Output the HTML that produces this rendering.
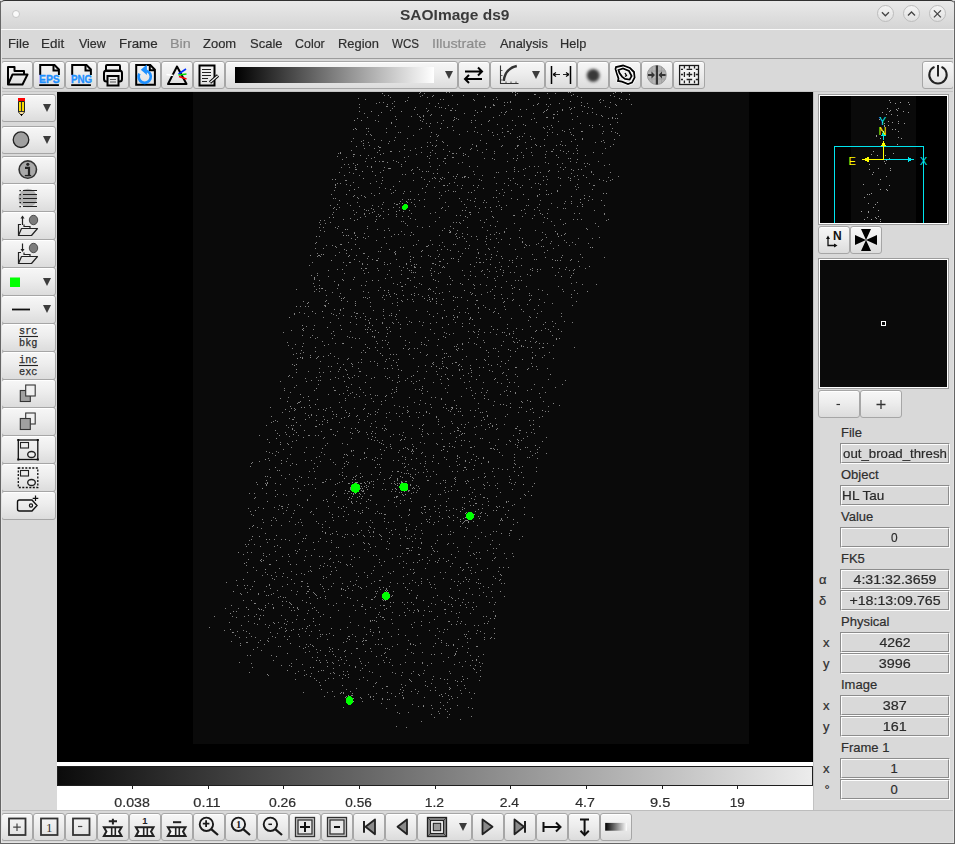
<!DOCTYPE html><html><head><meta charset="utf-8"><style>
*{margin:0;padding:0;box-sizing:border-box}
html,body{width:955px;height:844px;overflow:hidden;background:#d9d9d9;font-family:"Liberation Sans",sans-serif;color:#2e2e2e}
.mi,.lbl,.et,.tl{-webkit-text-stroke:0.2px currentColor}
.a{position:absolute}
.b{position:absolute;border:1px solid #a6a6a6;border-radius:3px;background:linear-gradient(#f7f7f7 0%,#ededed 45%,#dcdcdc 100%);box-shadow:inset 0 1px 0 #fff}
.b svg{position:absolute;left:-1px;top:-1px;overflow:visible}
.mi{position:absolute;top:36px;font-size:13.5px;color:#2e2e2e;white-space:nowrap}
.dis{color:#8c8c8c}
.lbl{position:absolute;font-size:13px;color:#2e2e2e;white-space:nowrap}
.ent{position:absolute;border:1px solid;border-color:#8c8c8c #fdfdfd #fdfdfd #8c8c8c;background:#d9d9d9;overflow:hidden}
.ent>.ib{position:absolute;left:0;top:0;right:0;bottom:0;border:1px solid;border-color:#fdfdfd #8c8c8c #8c8c8c #fdfdfd}
.et{position:absolute;top:2px;left:0;font-size:13px;color:#2a2a2a;white-space:nowrap;width:100%;text-align:center}
.tk{position:absolute;top:786px;width:1px;height:3px;background:#222}
.tl{position:absolute;font-size:12.5px;color:#2e2e2e;white-space:nowrap;text-align:center;width:60px}
</style></head><body>
<div class="a" style="left:0;top:0;width:955px;height:29px;background:linear-gradient(#e9e9e9,#d5d5d5);border-top:1px solid #303030;border-radius:5px 5px 0 0"></div>
<div id="t_title" class="a" style="left:400.30px;top:6px;transform:scaleX(1.0330);transform-origin:0 0;font-weight:bold;font-size:15px;color:#3a3a3a;white-space:nowrap">SAOImage ds9</div>
<div class="a" style="left:12px;top:10px;width:8px;height:8px;border-radius:50%;background:#fafafa;border:1px solid #c6c6c6"></div>
<div class="a" style="left:876.9px;top:5.4px;width:17px;height:17px;border-radius:50%;border:1px solid #bdbdbd;background:linear-gradient(#f4f4f4,#e0e0e0)"></div>
<svg class="a" style="left:0;top:0" width="955" height="30"><path d="M881.9,12.3 L885.4,15.8 L888.9,12.3" stroke="#444" stroke-width="1.3" fill="none"/></svg>
<div class="a" style="left:903.0px;top:5.4px;width:17px;height:17px;border-radius:50%;border:1px solid #bdbdbd;background:linear-gradient(#f4f4f4,#e0e0e0)"></div>
<svg class="a" style="left:0;top:0" width="955" height="30"><path d="M908.0,15.5 L911.5,12 L915.0,15.5" stroke="#444" stroke-width="1.3" fill="none"/></svg>
<div class="a" style="left:928.9px;top:5.4px;width:17px;height:17px;border-radius:50%;border:1px solid #bdbdbd;background:linear-gradient(#f4f4f4,#e0e0e0)"></div>
<svg class="a" style="left:0;top:0" width="955" height="30"><path d="M933.9,10.4 L940.9,17.4 M940.9,10.4 L933.9,17.4" stroke="#444" stroke-width="1.3" fill="none"/></svg>
<div class="a" style="left:0;top:29px;width:955px;height:1px;background:#fbfbfb"></div>
<div class="a" style="left:0;top:58px;width:955px;height:1px;background:#9c9c9c"></div>
<div id="t_m0" class="mi" style="left:7.93px;top:36px;transform:scaleX(0.9800);transform-origin:0 0;position:absolute">File</div>
<div id="t_m1" class="mi" style="left:41.30px;top:36px;transform:scaleX(0.9957);transform-origin:0 0;position:absolute">Edit</div>
<div id="t_m2" class="mi" style="left:78.89px;top:36px;transform:scaleX(0.9233);transform-origin:0 0;position:absolute">View</div>
<div id="t_m3" class="mi" style="left:119.11px;top:36px;transform:scaleX(0.9921);transform-origin:0 0;position:absolute">Frame</div>
<div id="t_m4" class="mi dis" style="left:170.02px;top:36px;transform:scaleX(1.0647);transform-origin:0 0;position:absolute">Bin</div>
<div id="t_m5" class="mi" style="left:203.11px;top:36px;transform:scaleX(0.9618);transform-origin:0 0;position:absolute">Zoom</div>
<div id="t_m6" class="mi" style="left:249.91px;top:36px;transform:scaleX(0.9636);transform-origin:0 0;position:absolute">Scale</div>
<div id="t_m7" class="mi" style="left:294.73px;top:36px;transform:scaleX(0.9219);transform-origin:0 0;position:absolute">Color</div>
<div id="t_m8" class="mi" style="left:337.52px;top:36px;transform:scaleX(0.9571);transform-origin:0 0;position:absolute">Region</div>
<div id="t_m9" class="mi" style="left:392.13px;top:36px;transform:scaleX(0.8613);transform-origin:0 0;position:absolute">WCS</div>
<div id="t_m10" class="mi dis" style="left:431.81px;top:36px;transform:scaleX(1.0653);transform-origin:0 0;position:absolute">Illustrate</div>
<div id="t_m11" class="mi" style="left:499.50px;top:36px;transform:scaleX(0.9520);transform-origin:0 0;position:absolute">Analysis</div>
<div id="t_m12" class="mi" style="left:559.56px;top:36px;transform:scaleX(0.9444);transform-origin:0 0;position:absolute">Help</div>
<div class="b" style="left:1px;top:61px;width:32px;height:28px"><svg width="32" height="28" viewBox="1 61 32 28"><path d="M8,84.5 V67 H14.5 V71 H24 V74.5" stroke="#000" fill="none" stroke-width="2" stroke-linejoin="round"/><path d="M12.5,74.5 H27.5 L22.5,84.5 H8 Z" stroke="#000" fill="none" stroke-width="2" stroke-linejoin="round"/></svg></div>
<div class="b" style="left:33px;top:61px;width:32px;height:28px"><svg width="32" height="28" viewBox="33 61 32 28"><path d="M40.2,75 V65.1 H54.5 L58.9,69.5 V75" stroke="#000" fill="none" stroke-width="2" stroke-linejoin="miter"/><path d="M53.5,65 V70.5 H59" stroke="#000" stroke-width="2" fill="none"/><rect x="39.2" y="84.2" width="19.7" height="1.8" fill="#000"/><text x="39" y="83.1" font-family="Liberation Sans" font-weight="bold" font-size="11" fill="#1e90ff" textLength="20.8" lengthAdjust="spacingAndGlyphs" stroke="#1e90ff" stroke-width="0.35">EPS</text></svg></div>
<div class="b" style="left:65px;top:61px;width:32px;height:28px"><svg width="32" height="28" viewBox="65 61 32 28"><path d="M72.2,75 V65.1 H86.5 L90.9,69.5 V75" stroke="#000" fill="none" stroke-width="2" stroke-linejoin="miter"/><path d="M85.5,65 V70.5 H91" stroke="#000" stroke-width="2" fill="none"/><rect x="71.2" y="84.2" width="19.7" height="1.8" fill="#000"/><text x="71" y="83.1" font-family="Liberation Sans" font-weight="bold" font-size="11" fill="#1e90ff" textLength="21.2" lengthAdjust="spacingAndGlyphs" stroke="#1e90ff" stroke-width="0.35">PNG</text></svg></div>
<div class="b" style="left:97px;top:61px;width:32px;height:28px"><svg width="32" height="28" viewBox="97 61 32 28"><rect x="106" y="65" width="14" height="6" rx="1" stroke="#000" fill="none" stroke-width="2"/><rect x="104" y="70.5" width="18" height="11" rx="2.5" stroke="#000" fill="none" stroke-width="2"/><rect x="107.5" y="76" width="11" height="9.5" fill="#e6e6e6" stroke="#000" fill="none" stroke-width="2"/><path d="M110,79.5 H116 M110,82 H116" stroke="#555" stroke-width="1.2"/></svg></div>
<div class="b" style="left:129px;top:61px;width:32px;height:28px"><svg width="32" height="28" viewBox="129 61 32 28"><path d="M136.2,84.8 V65.1 H150.3 L154.9,69.7 V84.8 Z" stroke="#000" fill="none" stroke-width="2"/><path d="M149.8,65 V70.3 H155" stroke="#000" stroke-width="2" fill="none"/><path d="M146.4,70.8 A6.1,6.1 0 1 1 139.4,73.65" stroke="#1e90ff" stroke-width="2.7" fill="none"/><path d="M140.8,69.8 L146.9,64.6 L146.9,75 Z" fill="#1e90ff"/></svg></div>
<div class="b" style="left:161px;top:61px;width:32px;height:28px"><svg width="32" height="28" viewBox="161 61 32 28"><path d="M177,66.5 L168,84 H186.5 Z" stroke="#000" fill="none" stroke-width="2" stroke-linejoin="round"/><path d="M166.5,74.5 L173.5,75.5" stroke="#fff" stroke-width="1.6"/><path d="M178.5,74 L186,69" stroke="#0030ff" stroke-width="1.6"/><path d="M178.5,75 L186.5,74" stroke="#00dd00" stroke-width="1.6"/><path d="M179,76.5 L186.5,79" stroke="#ff0000" stroke-width="1.6"/></svg></div>
<div class="b" style="left:193px;top:61px;width:32px;height:28px"><svg width="32" height="28" viewBox="193 61 32 28"><rect x="199.5" y="65.5" width="15" height="20" stroke="#000" fill="none" stroke-width="2"/><path d="M202,69.5 H211 M202,72.5 H211 M202,75.5 H211 M202,78.5 H208 M202,81.5 H207" stroke="#222" stroke-width="1.2"/><path d="M210,82.5 L218,75.5" stroke="#000" stroke-width="3.2"/><path d="M210.3,82.2 L217.7,75.8" stroke="#eee" stroke-width="1.3"/></svg></div>
<div class="b" style="left:225px;top:61px;width:233px;height:28px"><svg width="233" height="28" viewBox="225 61 233 28"><polygon points="445,71 453,71 449,79" fill="#3c3c3c"/></svg></div>
<div class="a" style="left:235px;top:67px;width:199px;height:16px;background:linear-gradient(90deg,#000 0%,#fff 100%)"></div>
<div class="b" style="left:458px;top:61px;width:32px;height:28px"><svg width="32" height="28" viewBox="458 61 32 28"><path d="M465,71.5 H482 M478,67.5 L482,71.5 L478,75.5 M482,79 H465 M469,75 L465,79 L469,83" stroke="#000" stroke-width="2" fill="none"/></svg></div>
<div class="b" style="left:490px;top:61px;width:55px;height:28px"><svg width="55" height="28" viewBox="490 61 55 28"><path d="M500.5,65.5 V83.5 H518.5" stroke="#333" stroke-width="1.1" fill="none"/><path d="M501,70.5 H502.5 M501,75.5 H502.5 M501,80 H502.5 M506,83 V81.5 M511,83 V81.5 M516,83 V81.5" stroke="#444" stroke-width="0.9"/><path d="M503.8,80.8 C504.5,73.5 508.5,67.8 516.8,66" stroke="#333" stroke-width="2.4" fill="none"/><polygon points="532,71 540,71 536,79" fill="#3c3c3c"/></svg></div>
<div class="b" style="left:545px;top:61px;width:32px;height:28px"><svg width="32" height="28" viewBox="545 61 32 28"><path d="M551.5,66 V84 M570.5,66 V84" stroke="#000" stroke-width="1.5"/><path d="M553,74.5 H560 M563,74.5 H569" stroke="#222" stroke-width="1.2"/><path d="M553,74.5 L556,72.5 M553,74.5 L556,76.5 M569,74.5 L566,72.5 M569,74.5 L566,76.5" stroke="#000" stroke-width="1.2"/></svg></div>
<div class="b" style="left:577px;top:61px;width:32px;height:28px"><svg width="32" height="28" viewBox="577 61 32 28"><circle cx="593.2" cy="75.4" r="6.4" fill="#383838" style="filter:blur(1.5px)"/></svg></div>
<div class="b" style="left:609px;top:61px;width:32px;height:28px"><svg width="32" height="28" viewBox="609 61 32 28"><path d="M615.5,69 L616,67 L623,65.5 L630,68 L634,72 L634.6,77.6 L632,82.6 L628,84 L622,81.6 L618,81 L618.5,78.6 L617,74 Z" stroke="#fff" stroke-width="3.4" fill="none" stroke-linejoin="round"/><path d="M615.5,69 L616,67 L623,65.5 L630,68 L634,72 L634.6,77.6 L632,82.6 L628,84 L622,81.6 L618,81 L618.5,78.6 L617,74 Z" stroke="#000" stroke-width="1.8" fill="none" stroke-linejoin="miter"/><path d="M618.5,70 L623,68.5 L629,71 L631.6,76 L629.6,79.6 L625,79 L622,76.6 L619.5,73 Z" stroke="#fff" stroke-width="3.2" fill="none"/><path d="M618.5,70 L623,68.5 L629,71 L631.6,76 L629.6,79.6 L625,79 L622,76.6 L619.5,73 Z" stroke="#000" stroke-width="1.8" fill="none" stroke-linejoin="miter"/><path d="M625,73 L626.5,75.5 L625,76.5" stroke="#000" stroke-width="1.3" fill="none"/></svg></div>
<div class="b" style="left:641px;top:61px;width:32px;height:28px"><svg width="32" height="28" viewBox="641 61 32 28"><circle cx="656.8" cy="75" r="9.5" fill="#b4b4b4" stroke="#9a9a9a" stroke-width="1"/><path d="M648,71 H665.6 M648,79 H665.6 M652,66.5 V83.5 M661.6,66.5 V83.5" stroke="#9c9c9c" stroke-width="0.8"/><rect x="655.8" y="65.5" width="2.2" height="19" fill="#333"/><path d="M648,75 H653 M665.6,75 H661" stroke="#333" stroke-width="2"/><path d="M651.5,71.5 L655,75 L651.5,78.5 Z M662,71.5 L658.5,75 L662,78.5 Z" fill="#333"/></svg></div>
<div class="b" style="left:673px;top:61px;width:32px;height:28px"><svg width="32" height="28" viewBox="673 61 32 28"><rect x="679.6" y="65.5" width="18.9" height="19" stroke="#1a1a1a" stroke-width="1.3" fill="#f2f2f2"/><path d="M684.4,66 V68.6 M684.4,72 V77 M684.4,80.6 V83.2 M689.4,66 V68.6 M689.4,72 V77 M689.4,80.6 V83.2 M694.5,66 V68.6 M694.5,72 V77 M694.5,80.6 V83.2 M681,69.4 H683 M686.6,69.4 H692.2 M695.8,69.4 H698 M681,74.5 H683 M686.6,74.5 H692.2 M695.8,74.5 H698 M681,79.5 H683 M686.6,79.5 H692.2 M695.8,79.5 H698 " stroke="#222" stroke-width="1.3" fill="none"/></svg></div>
<div class="b" style="left:922px;top:61px;width:32px;height:28px"><svg width="32" height="28" viewBox="922 61 32 28"><path d="M934.5,66.8 A8.7,8.7 0 1 0 941.5,66.8" stroke="#222" stroke-width="2" fill="none"/><path d="M938,65 V76.6" stroke="#222" stroke-width="2"/></svg></div>
<div class="a" style="left:1px;top:91px;width:953px;height:1px;background:#c4c4c4"></div>
<div class="a" style="left:57px;top:92px;width:756px;height:670px;background:#000"></div>
<div class="a" style="left:193px;top:92px;width:556px;height:652px;background:#0a0a0a"></div>
<svg class="a" style="left:0;top:0" width="955" height="844" shape-rendering="crispEdges"><path d="m446 92h1v1h-1zm3 0h1v1h-1zm63 0h1v1h-1zm3 0h1v1h-1zm53 0h1v1h-1zm2 0h1v1h-1zm45 0h1v1h-1zm-196 1h1v1h-1zm5 0h1v1h-1zm93 0h1v1h-1zm30 0h1v1h-1zm8 0h1v1h-1zm58 0h1v1h-1zm-136 1h1v1h-1zm58 0h1v1h-1zm38 0h1v1h-1zm56 0h1v1h-1zm-245 1h1v1h-1zm38 0h1v1h-1zm11 0h1v1h-1zm82 0h1v1h-1zm-95 1h1v1h-1zm64 0h1v1h-1zm93 0h1v1h-1zm37 0h1v1h-1zm-206 1h1v1h-1zm19 0h1v1h-1zm69 0h1v1h-1zm85 0h1v1h-1zm-223 1h1v1h-1zm191 0h1v1h-1zm-184 1h1v1h-1zm75 0h1v1h-1zm33 0h1v1h-1zm20 0h1v1h-1zm4 0h1v1h-1zm31 0h1v1h-1zm35 0h1v1h-1zm37 0h1v1h-1zm21 0h1v1h-1zm5 0h1v1h-1zm3 0h1v1h-1zm-222 1h1v1h-1zm67 0h1v1h-1zm125 0h1v1h-1zm4 0h1v1h-1zm-209 1h1v1h-1zm116 0h1v1h-1zm-131 1h1v1h-1zm4 0h1v1h-1zm121 0h1v1h-1zm3 0h1v1h-1zm3 0h1v1h-1zm71 0h1v1h-1zm19 0h1v1h-1zm10 0h1v1h-1zm-234 1h1v1h-1zm16 0h1v1h-1zm37 0h1v1h-1zm109 0h1v1h-1zm21 0h1v1h-1zm28 0h1v1h-1zm-228 1h1v1h-1zm28 0h1v1h-1zm70 0h1v1h-1zm36 0h1v1h-1zm57 0h1v1h-1zm65 0h1v1h-1zm16 0h1v1h-1zm-183 1h1v1h-1zm45 0h1v1h-1zm1 0h1v1h-1zm10 0h1v1h-1zm-118 1h1v1h-1zm1 0h1v1h-1zm7 0h1v1h-1zm41 0h1v1h-1zm113 0h1v1h-1zm57 0h1v1h-1zm-246 1h1v1h-1zm56 0h1v1h-1zm24 0h1v1h-1zm2 0h1v1h-1zm44 0h1v1h-1zm5 0h1v1h-1zm79 0h1v1h-1zm19 0h1v1h-1zm21 0h1v1h-1zm-217 1h1v1h-1zm34 0h1v1h-1zm26 0h1v1h-1zm119 0h1v1h-1zm-60 1h1v1h-1zm15 0h1v1h-1zm21 0h1v1h-1zm15 0h1v1h-1zm8 0h1v1h-1zm-180 1h1v1h-1zm38 0h1v1h-1zm22 0h1v1h-1zm1 0h1v1h-1zm4 0h1v1h-1zm20 0h1v1h-1zm87 0h1v1h-1zm-135 1h1v1h-1zm54 0h1v1h-1zm25 0h1v1h-1zm38 0h1v1h-1zm13 0h1v1h-1zm25 0h1v1h-1zm-81 1h1v1h-1zm42 0h1v1h-1zm49 0h1v1h-1zm-228 1h1v1h-1zm100 0h1v1h-1zm69 0h1v1h-1zm38 0h1v1h-1zm-154 1h1v1h-1zm14 0h1v1h-1zm73 0h1v1h-1zm49 0h1v1h-1zm1 0h1v1h-1zm3 0h1v1h-1zm39 0h1v1h-1zm20 0h1v1h-1zm-238 1h1v1h-1zm45 0h1v1h-1zm7 0h1v1h-1zm69 0h1v1h-1zm102 0h1v1h-1zm-206 1h1v1h-1zm16 0h1v1h-1zm8 0h1v1h-1zm4 0h1v1h-1zm95 0h1v1h-1zm3 0h1v1h-1zm56 0h1v1h-1zm25 0h1v1h-1zm-235 1h1v1h-1zm53 0h1v1h-1zm73 0h1v1h-1zm53 0h1v1h-1zm1 0h1v1h-1zm6 0h1v1h-1zm-97 1h1v1h-1zm78 0h1v1h-1zm19 0h1v1h-1zm59 0h1v1h-1zm3 0h1v1h-1zm-192 1h1v1h-1zm31 0h1v1h-1zm4 0h1v1h-1zm73 0h1v1h-1zm41 0h1v1h-1zm-197 1h1v1h-1zm45 0h1v1h-1zm23 0h1v1h-1zm10 0h1v1h-1zm18 0h1v1h-1zm4 0h1v1h-1zm37 0h1v1h-1zm-134 1h1v1h-1zm44 0h1v1h-1zm66 0h1v1h-1zm70 0h1v1h-1zm-121 1h1v1h-1zm34 0h1v1h-1zm146 0h1v1h-1zm-226 1h1v1h-1zm35 0h1v1h-1zm4 0h1v1h-1zm150 0h1v1h-1zm-99 1h1v1h-1zm16 0h1v1h-1zm26 0h1v1h-1zm76 0h1v1h-1zm-84 1h1v1h-1zm36 0h1v1h-1zm38 0h1v1h-1zm3 0h1v1h-1zm-197 1h1v1h-1zm13 0h1v1h-1zm44 0h1v1h-1zm95 0h1v1h-1zm55 0h1v1h-1zm-127 1h1v1h-1zm68 0h1v1h-1zm9 0h1v1h-1zm40 0h1v1h-1zm-224 1h1v1h-1zm18 0h1v1h-1zm35 0h1v1h-1zm81 0h1v1h-1zm42 0h1v1h-1zm29 0h1v1h-1zm39 0h1v1h-1zm-259 1h1v1h-1zm3 0h1v1h-1zm63 0h1v1h-1zm93 0h1v1h-1zm37 0h1v1h-1zm20 0h1v1h-1zm-116 1h1v1h-1zm35 0h1v1h-1zm74 0h1v1h-1zm-194 1h1v1h-1zm99 0h1v1h-1zm7 0h1v1h-1zm33 0h1v1h-1zm1 0h1v1h-1zm56 0h1v1h-1zm18 0h1v1h-1zm21 0h1v1h-1zm8 0h1v1h-1zm-225 1h1v1h-1zm12 0h1v1h-1zm2 0h1v1h-1zm77 0h1v1h-1zm25 0h1v1h-1zm45 0h1v1h-1zm5 0h1v1h-1zm18 0h1v1h-1zm45 0h1v1h-1zm-91 1h1v1h-1zm78 0h1v1h-1zm-236 1h1v1h-1zm4 0h1v1h-1zm66 0h1v1h-1zm23 0h1v1h-1zm22 0h1v1h-1zm16 0h1v1h-1zm60 0h1v1h-1zm14 0h1v1h-1zm-200 1h1v1h-1zm42 0h1v1h-1zm25 0h1v1h-1zm55 0h1v1h-1zm126 0h1v1h-1zm-189 1h1v1h-1zm7 0h1v1h-1zm67 0h1v1h-1zm15 0h1v1h-1zm3 0h1v1h-1zm8 0h1v1h-1zm-135 1h1v1h-1zm122 0h1v1h-1zm-164 1h1v1h-1zm54 0h1v1h-1zm127 0h1v1h-1zm48 0h1v1h-1zm-208 1h1v1h-1zm125 0h1v1h-1zm32 0h1v1h-1zm13 0h1v1h-1zm31 0h1v1h-1zm7 0h1v1h-1zm-219 1h1v1h-1zm18 0h1v1h-1zm13 0h1v1h-1zm86 0h1v1h-1zm123 0h1v1h-1zm-252 1h1v1h-1zm10 0h1v1h-1zm28 0h1v1h-1zm53 0h1v1h-1zm119 0h1v1h-1zm10 0h1v1h-1zm30 0h1v1h-1zm-233 1h1v1h-1zm59 0h1v1h-1zm3 0h1v1h-1zm13 0h1v1h-1zm82 0h1v1h-1zm70 0h1v1h-1zm9 0h1v1h-1zm-241 1h1v1h-1zm25 0h1v1h-1zm84 1h1v1h-1zm63 0h1v1h-1zm25 0h1v1h-1zm53 0h1v1h-1zm-250 1h1v1h-1zm6 0h1v1h-1zm35 0h1v1h-1zm32 0h1v1h-1zm11 0h1v1h-1zm29 0h1v1h-1zm26 0h1v1h-1zm15 0h1v1h-1zm1 0h1v1h-1zm26 0h1v1h-1zm18 0h1v1h-1zm3 0h1v1h-1zm-138 1h1v1h-1zm8 0h1v1h-1zm41 0h1v1h-1zm25 0h1v1h-1zm109 0h1v1h-1zm-231 1h1v1h-1zm1 0h1v1h-1zm80 0h1v1h-1zm71 0h1v1h-1zm-167 1h1v1h-1zm10 0h1v1h-1zm41 0h1v1h-1zm56 0h1v1h-1zm44 0h1v1h-1zm11 0h1v1h-1zm50 0h1v1h-1zm29 0h1v1h-1zm-201 1h1v1h-1zm39 0h1v1h-1zm27 0h1v1h-1zm16 0h1v1h-1zm67 0h1v1h-1zm-202 1h1v1h-1zm59 0h1v1h-1zm22 0h1v1h-1zm45 0h1v1h-1zm83 0h1v1h-1zm-169 1h1v1h-1zm8 0h1v1h-1zm95 0h1v1h-1zm52 0h1v1h-1zm5 0h1v1h-1zm1 0h1v1h-1zm11 0h1v1h-1zm-223 1h1v1h-1zm37 0h1v1h-1zm44 0h1v1h-1zm9 0h1v1h-1zm52 0h1v1h-1zm39 0h1v1h-1zm10 0h1v1h-1zm-193 1h1v1h-1zm45 0h1v1h-1zm52 0h1v1h-1zm17 0h1v1h-1zm1 0h1v1h-1zm3 0h1v1h-1zm7 0h1v1h-1zm31 0h1v1h-1zm72 0h1v1h-1zm7 0h1v1h-1zm4 0h1v1h-1zm25 0h1v1h-1zm-248 1h1v1h-1zm62 0h1v1h-1zm129 0h1v1h-1zm-177 1h1v1h-1zm62 0h1v1h-1zm17 0h1v1h-1zm70 0h1v1h-1zm6 0h1v1h-1zm9 0h1v1h-1zm53 0h1v1h-1zm-248 1h1v1h-1zm16 0h1v1h-1zm55 0h1v1h-1zm60 0h1v1h-1zm-122 1h1v1h-1zm58 0h1v1h-1zm48 0h1v1h-1zm1 0h1v1h-1zm70 0h1v1h-1zm22 0h1v1h-1zm-179 1h1v1h-1zm5 0h1v1h-1zm58 0h1v1h-1zm8 0h1v1h-1zm7 0h1v1h-1zm40 0h1v1h-1zm8 0h1v1h-1zm76 0h1v1h-1zm2 0h1v1h-1zm-228 1h1v1h-1zm152 0h1v1h-1zm-101 1h1v1h-1zm123 0h1v1h-1zm-151 1h1v1h-1zm14 0h1v1h-1zm3 0h1v1h-1zm1 0h1v1h-1zm13 0h1v1h-1zm47 0h1v1h-1zm64 0h1v1h-1zm63 0h1v1h-1zm28 0h1v1h-1zm-200 1h1v1h-1zm31 0h1v1h-1zm33 0h1v1h-1zm83 0h1v1h-1zm31 0h1v1h-1zm-223 1h1v1h-1zm105 0h1v1h-1zm90 0h1v1h-1zm14 0h1v1h-1zm22 0h1v1h-1zm-240 1h1v1h-1zm4 0h1v1h-1zm53 0h1v1h-1zm188 0h1v1h-1zm20 0h1v1h-1zm-254 1h1v1h-1zm84 0h1v1h-1zm165 0h1v1h-1zm-237 1h1v1h-1zm4 0h1v1h-1zm30 0h1v1h-1zm29 0h1v1h-1zm47 0h1v1h-1zm52 0h1v1h-1zm5 0h1v1h-1zm4 0h1v1h-1zm47 0h1v1h-1zm-244 1h1v1h-1zm8 0h1v1h-1zm6 0h1v1h-1zm16 0h1v1h-1zm13 0h1v1h-1zm33 0h1v1h-1zm97 0h1v1h-1zm46 0h1v1h-1zm5 0h1v1h-1zm-177 1h1v1h-1zm2 0h1v1h-1zm135 0h1v1h-1zm-170 1h1v1h-1zm57 0h1v1h-1zm7 0h1v1h-1zm18 0h1v1h-1zm77 0h1v1h-1zm9 0h1v1h-1zm40 0h1v1h-1zm8 0h1v1h-1zm7 0h1v1h-1zm3 0h1v1h-1zm-198 1h1v1h-1zm28 0h1v1h-1zm11 1h1v1h-1zm4 0h1v1h-1zm2 0h1v1h-1zm45 0h1v1h-1zm41 0h1v1h-1zm44 0h1v1h-1zm33 0h1v1h-1zm-252 1h1v1h-1zm10 0h1v1h-1zm31 0h1v1h-1zm116 0h1v1h-1zm2 0h1v1h-1zm42 0h1v1h-1zm51 0h1v1h-1zm19 0h1v1h-1zm-257 1h1v1h-1zm80 0h1v1h-1zm138 0h1v1h-1zm-169 1h1v1h-1zm3 0h1v1h-1zm69 0h1v1h-1zm119 0h1v1h-1zm-249 1h1v1h-1zm15 0h1v1h-1zm16 0h1v1h-1zm107 0h1v1h-1zm42 0h1v1h-1zm53 0h1v1h-1zm-124 1h1v1h-1zm11 0h1v1h-1zm1 0h1v1h-1zm78 0h1v1h-1zm3 0h1v1h-1zm28 0h1v1h-1zm44 0h1v1h-1zm-236 1h1v1h-1zm39 0h1v1h-1zm13 0h1v1h-1zm8 0h1v1h-1zm20 0h1v1h-1zm2 0h1v1h-1zm30 0h1v1h-1zm64 0h1v1h-1zm10 0h1v1h-1zm18 0h1v1h-1zm22 0h1v1h-1zm-176 1h1v1h-1zm3 0h1v1h-1zm5 0h1v1h-1zm4 0h1v1h-1zm11 0h1v1h-1zm53 0h1v1h-1zm5 0h1v1h-1zm47 0h1v1h-1zm-228 1h1v1h-1zm92 0h1v1h-1zm17 0h1v1h-1zm38 0h1v1h-1zm50 0h1v1h-1zm18 0h1v1h-1zm31 0h1v1h-1zm34 0h1v1h-1zm-267 1h1v1h-1zm1 0h1v1h-1zm67 0h1v1h-1zm68 0h1v1h-1zm29 0h1v1h-1zm33 0h1v1h-1zm60 0h1v1h-1zm7 0h1v1h-1zm-234 1h1v1h-1zm63 0h1v1h-1zm167 0h1v1h-1zm-253 1h1v1h-1zm101 0h1v1h-1zm-117 1h1v1h-1zm3 0h1v1h-1zm30 0h1v1h-1zm11 0h1v1h-1zm115 0h1v1h-1zm8 0h1v1h-1zm11 0h1v1h-1zm20 0h1v1h-1zm3 0h1v1h-1zm51 0h1v1h-1zm-243 1h1v1h-1zm171 0h1v1h-1zm23 0h1v1h-1zm6 0h1v1h-1zm31 0h1v1h-1zm-242 1h1v1h-1zm15 0h1v1h-1zm93 0h1v1h-1zm4 0h1v1h-1zm10 0h1v1h-1zm5 0h1v1h-1zm16 0h1v1h-1zm30 0h1v1h-1zm14 0h1v1h-1zm38 0h1v1h-1zm33 0h1v1h-1zm1 0h1v1h-1zm-168 1h1v1h-1zm149 0h1v1h-1zm-217 1h1v1h-1zm21 0h1v1h-1zm55 0h1v1h-1zm43 0h1v1h-1zm43 0h1v1h-1zm11 0h1v1h-1zm47 0h1v1h-1zm-193 1h1v1h-1zm76 0h1v1h-1zm22 0h1v1h-1zm-93 1h1v1h-1zm112 0h1v1h-1zm37 0h1v1h-1zm37 0h1v1h-1zm16 0h1v1h-1zm-258 1h1v1h-1zm61 0h1v1h-1zm53 0h1v1h-1zm26 0h1v1h-1zm37 0h1v1h-1zm35 0h1v1h-1zm11 0h1v1h-1zm-153 1h1v1h-1zm6 0h1v1h-1zm35 0h1v1h-1zm10 0h1v1h-1zm-62 1h1v1h-1zm32 0h1v1h-1zm14 0h1v1h-1zm29 0h1v1h-1zm36 0h1v1h-1zm-133 1h1v1h-1zm20 0h1v1h-1zm12 0h1v1h-1zm96 0h1v1h-1zm52 0h1v1h-1zm-220 1h1v1h-1zm87 0h1v1h-1zm121 0h1v1h-1zm7 0h1v1h-1zm-192 1h1v1h-1zm7 0h1v1h-1zm13 0h1v1h-1zm67 0h1v1h-1zm62 0h1v1h-1zm81 0h1v1h-1zm-231 1h1v1h-1zm11 0h1v1h-1zm173 0h1v1h-1zm-180 1h1v1h-1zm8 0h1v1h-1zm128 0h1v1h-1zm3 0h1v1h-1zm-163 1h1v1h-1zm2 0h1v1h-1zm23 0h1v1h-1zm81 0h1v1h-1zm20 0h1v1h-1zm52 0h1v1h-1zm-109 1h1v1h-1zm6 0h1v1h-1zm2 0h1v1h-1zm4 0h1v1h-1zm10 0h1v1h-1zm43 0h1v1h-1zm125 0h1v1h-1zm-122 1h1v1h-1zm70 0h1v1h-1zm48 0h1v1h-1zm-188 1h1v1h-1zm61 0h1v1h-1zm37 0h1v1h-1zm67 0h1v1h-1zm6 0h1v1h-1zm-214 1h1v1h-1zm26 0h1v1h-1zm24 0h1v1h-1zm4 0h1v1h-1zm34 0h1v1h-1zm38 0h1v1h-1zm3 0h1v1h-1zm94 0h1v1h-1zm-233 1h1v1h-1zm47 0h1v1h-1zm5 0h1v1h-1zm152 0h1v1h-1zm13 0h1v1h-1zm-227 1h1v1h-1zm45 0h1v1h-1zm14 0h1v1h-1zm18 0h1v1h-1zm125 0h1v1h-1zm-209 1h1v1h-1zm20 0h1v1h-1zm22 0h1v1h-1zm33 0h1v1h-1zm94 0h1v1h-1zm7 0h1v1h-1zm20 0h1v1h-1zm2 0h1v1h-1zm-169 1h1v1h-1zm19 0h1v1h-1zm24 0h1v1h-1zm13 0h1v1h-1zm9 0h1v1h-1zm24 0h1v1h-1zm27 0h1v1h-1zm21 0h1v1h-1zm81 0h1v1h-1zm5 0h1v1h-1zm-248 1h1v1h-1zm5 0h1v1h-1zm54 0h1v1h-1zm6 0h1v1h-1zm43 0h1v1h-1zm24 0h1v1h-1zm19 0h1v1h-1zm16 0h1v1h-1zm36 0h1v1h-1zm20 0h1v1h-1zm-224 1h1v1h-1zm38 0h1v1h-1zm10 0h1v1h-1zm60 0h1v1h-1zm38 0h1v1h-1zm84 0h1v1h-1zm2 0h1v1h-1zm-201 1h1v1h-1zm9 0h1v1h-1zm15 0h1v1h-1zm136 0h1v1h-1zm10 0h1v1h-1zm14 0h1v1h-1zm-195 1h1v1h-1zm13 0h1v1h-1zm2 0h1v1h-1zm41 0h1v1h-1zm36 0h1v1h-1zm20 0h1v1h-1zm74 0h1v1h-1zm55 0h1v1h-1zm-220 1h1v1h-1zm9 0h1v1h-1zm20 0h1v1h-1zm-70 1h1v1h-1zm23 0h1v1h-1zm79 0h1v1h-1zm35 0h1v1h-1zm8 0h1v1h-1zm-114 1h1v1h-1zm5 0h1v1h-1zm42 0h1v1h-1zm19 0h1v1h-1zm95 0h1v1h-1zm22 0h1v1h-1zm27 0h1v1h-1zm5 0h1v1h-1zm25 0h1v1h-1zm-272 1h1v1h-1zm22 0h1v1h-1zm10 0h1v1h-1zm14 0h1v1h-1zm10 0h1v1h-1zm8 0h1v1h-1zm146 0h1v1h-1zm62 0h1v1h-1zm-144 1h1v1h-1zm53 0h1v1h-1zm21 0h1v1h-1zm-169 1h1v1h-1zm14 0h1v1h-1zm17 0h1v1h-1zm6 0h1v1h-1zm90 0h1v1h-1zm30 0h1v1h-1zm-162 1h1v1h-1zm79 0h1v1h-1zm28 0h1v1h-1zm77 0h1v1h-1zm-194 1h1v1h-1zm33 0h1v1h-1zm27 0h1v1h-1zm122 0h1v1h-1zm-189 1h1v1h-1zm14 0h1v1h-1zm19 0h1v1h-1zm39 0h1v1h-1zm71 0h1v1h-1zm74 0h1v1h-1zm13 0h1v1h-1zm4 0h1v1h-1zm4 0h1v1h-1zm27 0h1v1h-1zm-288 1h1v1h-1zm4 0h1v1h-1zm156 0h1v1h-1zm126 0h1v1h-1zm-205 1h1v1h-1zm2 0h1v1h-1zm32 0h1v1h-1zm62 0h1v1h-1zm54 0h1v1h-1zm-232 1h1v1h-1zm11 0h1v1h-1zm123 0h1v1h-1zm3 0h1v1h-1zm3 0h1v1h-1zm84 0h1v1h-1zm-218 1h1v1h-1zm80 0h1v1h-1zm55 0h1v1h-1zm54 0h1v1h-1zm81 0h1v1h-1zm-275 1h1v1h-1zm243 0h1v1h-1zm-156 1h1v1h-1zm83 0h1v1h-1zm64 0h1v1h-1zm-216 1h1v1h-1zm29 0h1v1h-1zm50 0h1v1h-1zm33 0h1v1h-1zm45 0h1v1h-1zm103 0h1v1h-1zm-279 1h1v1h-1zm4 0h1v1h-1zm12 0h1v1h-1zm87 0h1v1h-1zm45 0h1v1h-1zm15 0h1v1h-1zm-145 1h1v1h-1zm30 0h1v1h-1zm21 0h1v1h-1zm56 0h1v1h-1zm9 0h1v1h-1zm53 0h1v1h-1zm14 0h1v1h-1zm66 0h1v1h-1zm-239 1h1v1h-1zm30 0h1v1h-1zm210 0h1v1h-1zm-267 1h1v1h-1zm64 0h1v1h-1zm5 0h1v1h-1zm53 0h1v1h-1zm7 0h1v1h-1zm8 0h1v1h-1zm30 0h1v1h-1zm32 0h1v1h-1zm16 0h1v1h-1zm-211 1h1v1h-1zm77 0h1v1h-1zm103 0h1v1h-1zm-150 1h1v1h-1zm95 0h1v1h-1zm1 0h1v1h-1zm46 0h1v1h-1zm8 0h1v1h-1zm38 0h1v1h-1zm-178 1h1v1h-1zm92 0h1v1h-1zm6 0h1v1h-1zm95 0h1v1h-1zm8 0h1v1h-1zm-171 1h1v1h-1zm10 0h1v1h-1zm9 0h1v1h-1zm42 0h1v1h-1zm12 0h1v1h-1zm23 0h1v1h-1zm4 0h1v1h-1zm51 0h1v1h-1zm12 0h1v1h-1zm7 0h1v1h-1zm-218 1h1v1h-1zm9 0h1v1h-1zm55 0h1v1h-1zm29 0h1v1h-1zm-120 1h1v1h-1zm49 0h1v1h-1zm23 0h1v1h-1zm65 0h1v1h-1zm6 0h1v1h-1zm9 0h1v1h-1zm5 0h1v1h-1zm10 0h1v1h-1zm-123 1h1v1h-1zm21 0h1v1h-1zm75 0h1v1h-1zm60 0h1v1h-1zm27 0h1v1h-1zm53 0h1v1h-1zm-248 1h1v1h-1zm14 0h1v1h-1zm92 0h1v1h-1zm7 0h1v1h-1zm32 0h1v1h-1zm14 0h1v1h-1zm12 0h1v1h-1zm56 0h1v1h-1zm14 0h1v1h-1zm-237 1h1v1h-1zm122 0h1v1h-1zm13 0h1v1h-1zm11 0h1v1h-1zm41 0h1v1h-1zm-166 1h1v1h-1zm42 0h1v1h-1zm12 0h1v1h-1zm111 0h1v1h-1zm23 0h1v1h-1zm-79 1h1v1h-1zm37 0h1v1h-1zm29 0h1v1h-1zm-235 1h1v1h-1zm32 0h1v1h-1zm94 0h1v1h-1zm56 0h1v1h-1zm68 0h1v1h-1zm6 0h1v1h-1zm-257 1h1v1h-1zm71 0h1v1h-1zm152 0h1v1h-1zm12 0h1v1h-1zm38 0h1v1h-1zm-248 1h1v1h-1zm76 0h1v1h-1zm16 0h1v1h-1zm21 0h1v1h-1zm2 0h1v1h-1zm31 0h1v1h-1zm23 0h1v1h-1zm16 0h1v1h-1zm11 0h1v1h-1zm39 0h1v1h-1zm-249 1h1v1h-1zm6 0h1v1h-1zm96 0h1v1h-1zm11 0h1v1h-1zm30 0h1v1h-1zm57 0h1v1h-1zm3 0h1v1h-1zm29 0h1v1h-1zm11 0h1v1h-1zm-143 1h1v1h-1zm1 0h1v1h-1zm17 0h1v1h-1zm97 0h1v1h-1zm2 0h1v1h-1zm-207 1h1v1h-1zm45 0h1v1h-1zm19 0h1v1h-1zm3 0h1v1h-1zm91 0h1v1h-1zm30 0h1v1h-1zm-209 1h1v1h-1zm8 0h1v1h-1zm36 0h1v1h-1zm109 0h1v1h-1zm20 0h1v1h-1zm65 0h1v1h-1zm-209 1h1v1h-1zm7 0h1v1h-1zm38 0h1v1h-1zm52 0h1v1h-1zm6 0h1v1h-1zm30 0h1v1h-1zm12 0h1v1h-1zm26 0h1v1h-1zm-93 1h1v1h-1zm15 0h1v1h-1zm13 0h1v1h-1zm97 0h1v1h-1zm-169 1h1v1h-1zm2 0h1v1h-1zm15 0h1v1h-1zm63 0h1v1h-1zm39 0h1v1h-1zm-158 1h1v1h-1zm55 0h1v1h-1zm15 0h1v1h-1zm69 0h1v1h-1zm66 0h1v1h-1zm-227 1h1v1h-1zm29 0h1v1h-1zm17 0h1v1h-1zm1 0h1v1h-1zm31 0h1v1h-1zm67 0h1v1h-1zm16 0h1v1h-1zm-157 1h1v1h-1zm74 0h1v1h-1zm44 0h1v1h-1zm46 0h1v1h-1zm6 0h1v1h-1zm41 0h1v1h-1zm48 0h1v1h-1zm-262 1h1v1h-1zm17 0h1v1h-1zm21 0h1v1h-1zm72 0h1v1h-1zm68 0h1v1h-1zm66 0h1v1h-1zm-245 1h1v1h-1zm3 0h1v1h-1zm48 0h1v1h-1zm42 0h1v1h-1zm11 0h1v1h-1zm9 0h1v1h-1zm8 0h1v1h-1zm63 0h1v1h-1zm16 0h1v1h-1zm-41 1h1v1h-1zm15 0h1v1h-1zm54 0h1v1h-1zm37 0h1v1h-1zm22 0h1v1h-1zm-237 1h1v1h-1zm11 0h1v1h-1zm57 0h1v1h-1zm44 0h1v1h-1zm37 0h1v1h-1zm5 0h1v1h-1zm-149 1h1v1h-1zm24 0h1v1h-1zm47 0h1v1h-1zm15 0h1v1h-1zm28 0h1v1h-1zm4 0h1v1h-1zm44 0h1v1h-1zm2 0h1v1h-1zm16 0h1v1h-1zm-43 1h1v1h-1zm3 0h1v1h-1zm45 0h1v1h-1zm3 0h1v1h-1zm10 0h1v1h-1zm-211 1h1v1h-1zm51 0h1v1h-1zm29 0h1v1h-1zm1 0h1v1h-1zm-128 1h1v1h-1zm31 0h1v1h-1zm7 0h1v1h-1zm34 0h1v1h-1zm92 0h1v1h-1zm3 0h1v1h-1zm1 0h1v1h-1zm3 0h1v1h-1zm16 0h1v1h-1zm13 0h1v1h-1zm-150 1h1v1h-1zm28 0h1v1h-1zm42 0h1v1h-1zm1 0h1v1h-1zm-71 1h1v1h-1zm5 0h1v1h-1zm17 0h1v1h-1zm3 0h1v1h-1zm19 0h1v1h-1zm8 0h1v1h-1zm2 0h1v1h-1zm74 0h1v1h-1zm-181 1h1v1h-1zm37 0h1v1h-1zm65 0h1v1h-1zm28 0h1v1h-1zm82 0h1v1h-1zm-122 1h1v1h-1zm15 0h1v1h-1zm29 0h1v1h-1zm31 0h1v1h-1zm27 0h1v1h-1zm7 0h1v1h-1zm8 0h1v1h-1zm63 0h1v1h-1zm-176 1h1v1h-1zm11 0h1v1h-1zm1 0h1v1h-1zm5 0h1v1h-1zm22 0h1v1h-1zm2 0h1v1h-1zm51 0h1v1h-1zm71 0h1v1h-1zm-201 1h1v1h-1zm1 0h1v1h-1zm11 0h1v1h-1zm30 0h1v1h-1zm125 0h1v1h-1zm27 0h1v1h-1zm26 0h1v1h-1zm-248 1h1v1h-1zm150 0h1v1h-1zm43 0h1v1h-1zm10 0h1v1h-1zm25 0h1v1h-1zm9 0h1v1h-1zm-211 1h1v1h-1zm15 0h1v1h-1zm11 0h1v1h-1zm12 0h1v1h-1zm10 0h1v1h-1zm19 0h1v1h-1zm32 0h1v1h-1zm20 0h1v1h-1zm21 0h1v1h-1zm29 0h1v1h-1zm37 0h1v1h-1zm4 0h1v1h-1zm-139 1h1v1h-1zm36 0h1v1h-1zm11 0h1v1h-1zm8 0h1v1h-1zm7 0h1v1h-1zm41 0h1v1h-1zm-169 1h1v1h-1zm43 0h1v1h-1zm2 0h1v1h-1zm2 0h1v1h-1zm25 0h1v1h-1zm63 0h1v1h-1zm7 0h1v1h-1zm4 0h1v1h-1zm44 0h1v1h-1zm-241 1h1v1h-1zm27 0h1v1h-1zm20 0h1v1h-1zm67 0h1v1h-1zm7 0h1v1h-1zm135 0h1v1h-1zm-186 1h1v1h-1zm14 0h1v1h-1zm126 0h1v1h-1zm-216 1h1v1h-1zm6 0h1v1h-1zm147 0h1v1h-1zm6 0h1v1h-1zm32 0h1v1h-1zm28 0h1v1h-1zm25 0h1v1h-1zm16 0h1v1h-1zm-243 1h1v1h-1zm94 0h1v1h-1zm27 0h1v1h-1zm26 0h1v1h-1zm22 0h1v1h-1zm23 0h1v1h-1zm-106 1h1v1h-1zm73 0h1v1h-1zm-173 1h1v1h-1zm71 0h1v1h-1zm22 0h1v1h-1zm1 0h1v1h-1zm42 0h1v1h-1zm44 0h1v1h-1zm-180 1h1v1h-1zm39 0h1v1h-1zm115 0h1v1h-1zm-149 1h1v1h-1zm24 0h1v1h-1zm35 0h1v1h-1zm32 0h1v1h-1zm25 0h1v1h-1zm17 0h1v1h-1zm43 0h1v1h-1zm20 0h1v1h-1zm3 0h1v1h-1zm3 0h1v1h-1zm-187 1h1v1h-1zm32 0h1v1h-1zm72 0h1v1h-1zm68 0h1v1h-1zm-106 1h1v1h-1zm176 0h1v1h-1zm-263 1h1v1h-1zm80 0h1v1h-1zm26 0h1v1h-1zm152 0h1v1h-1zm-233 1h1v1h-1zm59 0h1v1h-1zm8 0h1v1h-1zm16 0h1v1h-1zm26 0h1v1h-1zm26 0h1v1h-1zm7 0h1v1h-1zm102 0h1v1h-1zm14 0h1v1h-1zm-277 1h1v1h-1zm19 0h1v1h-1zm23 0h1v1h-1zm4 0h1v1h-1zm109 0h1v1h-1zm12 0h1v1h-1zm25 0h1v1h-1zm-197 1h1v1h-1zm87 0h1v1h-1zm13 0h1v1h-1zm112 0h1v1h-1zm32 0h1v1h-1zm-178 1h1v1h-1zm36 0h1v1h-1zm20 0h1v1h-1zm78 0h1v1h-1zm-195 1h1v1h-1zm2 0h1v1h-1zm16 0h1v1h-1zm137 0h1v1h-1zm38 0h1v1h-1zm-216 1h1v1h-1zm20 0h1v1h-1zm34 0h1v1h-1zm78 0h1v1h-1zm2 0h1v1h-1zm62 0h1v1h-1zm46 0h1v1h-1zm24 0h1v1h-1zm-237 1h1v1h-1zm53 0h1v1h-1zm24 0h1v1h-1zm140 0h1v1h-1zm-228 1h1v1h-1zm5 0h1v1h-1zm44 0h1v1h-1zm70 0h1v1h-1zm16 0h1v1h-1zm41 0h1v1h-1zm73 0h1v1h-1zm-231 1h1v1h-1zm36 0h1v1h-1zm20 0h1v1h-1zm54 0h1v1h-1zm28 0h1v1h-1zm17 0h1v1h-1zm-147 1h1v1h-1zm74 0h1v1h-1zm21 0h1v1h-1zm37 0h1v1h-1zm57 0h1v1h-1zm48 0h1v1h-1zm-188 1h1v1h-1zm29 0h1v1h-1zm53 0h1v1h-1zm10 0h1v1h-1zm20 0h1v1h-1zm46 0h1v1h-1zm24 0h1v1h-1zm-245 1h1v1h-1zm57 0h1v1h-1zm3 0h1v1h-1zm28 0h1v1h-1zm14 0h1v1h-1zm47 0h1v1h-1zm54 0h1v1h-1zm2 0h1v1h-1zm-192 1h1v1h-1zm51 0h1v1h-1zm32 0h1v1h-1zm-78 1h1v1h-1zm19 0h1v1h-1zm2 0h1v1h-1zm4 0h1v1h-1zm13 0h1v1h-1zm47 0h1v1h-1zm26 0h1v1h-1zm2 0h1v1h-1zm4 0h1v1h-1zm110 0h1v1h-1zm-230 1h1v1h-1zm26 0h1v1h-1zm30 0h1v1h-1zm27 0h1v1h-1zm8 0h1v1h-1zm4 0h1v1h-1zm58 0h1v1h-1zm8 0h1v1h-1zm5 0h1v1h-1zm-123 1h1v1h-1zm23 0h1v1h-1zm5 0h1v1h-1zm17 0h1v1h-1zm3 0h1v1h-1zm11 0h1v1h-1zm70 0h1v1h-1zm17 0h1v1h-1zm9 0h1v1h-1zm-213 1h1v1h-1zm75 0h1v1h-1zm26 0h1v1h-1zm40 0h1v1h-1zm9 0h1v1h-1zm1 0h1v1h-1zm35 0h1v1h-1zm-209 1h1v1h-1zm22 0h1v1h-1zm22 0h1v1h-1zm8 0h1v1h-1zm47 0h1v1h-1zm11 0h1v1h-1zm23 0h1v1h-1zm140 0h1v1h-1zm-206 1h1v1h-1zm27 0h1v1h-1zm106 0h1v1h-1zm41 0h1v1h-1zm-189 1h1v1h-1zm37 0h1v1h-1zm160 0h1v1h-1zm-111 1h1v1h-1zm86 0h1v1h-1zm-203 1h1v1h-1zm1 0h1v1h-1zm72 0h1v1h-1zm86 0h1v1h-1zm36 0h1v1h-1zm53 0h1v1h-1zm-272 1h1v1h-1zm5 0h1v1h-1zm3 0h1v1h-1zm62 0h1v1h-1zm87 0h1v1h-1zm47 0h1v1h-1zm-26 1h1v1h-1zm7 0h1v1h-1zm-142 1h1v1h-1zm124 0h1v1h-1zm11 0h1v1h-1zm17 0h1v1h-1zm-161 1h1v1h-1zm6 0h1v1h-1zm43 0h1v1h-1zm71 0h1v1h-1zm35 0h1v1h-1zm16 0h1v1h-1zm16 0h1v1h-1zm13 0h1v1h-1zm-194 1h1v1h-1zm33 0h1v1h-1zm26 0h1v1h-1zm17 0h1v1h-1zm28 0h1v1h-1zm-61 1h1v1h-1zm44 0h1v1h-1zm67 0h1v1h-1zm29 0h1v1h-1zm18 0h1v1h-1zm-242 1h1v1h-1zm55 0h1v1h-1zm105 0h1v1h-1zm6 0h1v1h-1zm13 0h1v1h-1zm15 0h1v1h-1zm-199 1h1v1h-1zm10 0h1v1h-1zm11 0h1v1h-1zm16 0h1v1h-1zm8 0h1v1h-1zm17 0h1v1h-1zm7 0h1v1h-1zm28 0h1v1h-1zm46 0h1v1h-1zm31 0h1v1h-1zm69 0h1v1h-1zm24 0h1v1h-1zm-267 1h1v1h-1zm39 0h1v1h-1zm96 0h1v1h-1zm-93 1h1v1h-1zm7 0h1v1h-1zm40 0h1v1h-1zm6 0h1v1h-1zm-81 1h1v1h-1zm43 0h1v1h-1zm4 0h1v1h-1zm10 0h1v1h-1zm30 0h1v1h-1zm51 0h1v1h-1zm11 0h1v1h-1zm72 0h1v1h-1zm32 0h1v1h-1zm-238 1h1v1h-1zm37 0h1v1h-1zm46 0h1v1h-1zm36 0h1v1h-1zm15 0h1v1h-1zm43 0h1v1h-1zm30 0h1v1h-1zm6 0h1v1h-1zm-198 1h1v1h-1zm18 0h1v1h-1zm14 0h1v1h-1zm14 0h1v1h-1zm86 0h1v1h-1zm10 0h1v1h-1zm31 0h1v1h-1zm-146 1h1v1h-1zm11 0h1v1h-1zm20 0h1v1h-1zm57 0h1v1h-1zm16 0h1v1h-1zm-101 1h1v1h-1zm160 0h1v1h-1zm-119 1h1v1h-1zm143 0h1v1h-1zm12 0h1v1h-1zm-234 1h1v1h-1zm39 0h1v1h-1zm13 0h1v1h-1zm10 0h1v1h-1zm6 0h1v1h-1zm25 0h1v1h-1zm13 0h1v1h-1zm19 0h1v1h-1zm117 0h1v1h-1zm-203 1h1v1h-1zm13 0h1v1h-1zm11 0h1v1h-1zm37 0h1v1h-1zm32 0h1v1h-1zm7 0h1v1h-1zm86 0h1v1h-1zm-199 1h1v1h-1zm44 0h1v1h-1zm7 0h1v1h-1zm100 0h1v1h-1zm36 0h1v1h-1zm-229 1h1v1h-1zm26 0h1v1h-1zm25 0h1v1h-1zm7 0h1v1h-1zm50 0h1v1h-1zm52 0h1v1h-1zm-168 1h1v1h-1zm185 0h1v1h-1zm39 0h1v1h-1zm23 0h1v1h-1zm-185 1h1v1h-1zm18 0h1v1h-1zm3 0h1v1h-1zm53 0h1v1h-1zm-139 1h1v1h-1zm97 0h1v1h-1zm116 0h1v1h-1zm29 0h1v1h-1zm-232 1h1v1h-1zm52 0h1v1h-1zm2 0h1v1h-1zm3 0h1v1h-1zm17 0h1v1h-1zm43 0h1v1h-1zm67 0h1v1h-1zm25 0h1v1h-1zm26 0h1v1h-1zm-257 1h1v1h-1zm84 0h1v1h-1zm166 0h1v1h-1zm-191 1h1v1h-1zm118 0h1v1h-1zm5 0h1v1h-1zm5 0h1v1h-1zm35 0h1v1h-1zm22 0h1v1h-1zm26 0h1v1h-1zm-278 1h1v1h-1zm132 0h1v1h-1zm29 0h1v1h-1zm30 0h1v1h-1zm10 0h1v1h-1zm6 0h1v1h-1zm14 0h1v1h-1zm-173 1h1v1h-1zm103 0h1v1h-1zm12 0h1v1h-1zm7 0h1v1h-1zm56 0h1v1h-1zm4 0h1v1h-1zm-64 1h1v1h-1zm29 0h1v1h-1zm18 0h1v1h-1zm13 0h1v1h-1zm-207 1h1v1h-1zm10 0h1v1h-1zm22 0h1v1h-1zm172 0h1v1h-1zm46 0h1v1h-1zm-205 1h1v1h-1zm25 0h1v1h-1zm2 0h1v1h-1zm12 0h1v1h-1zm57 0h1v1h-1zm-133 1h1v1h-1zm7 0h1v1h-1zm32 0h1v1h-1zm3 0h1v1h-1zm22 0h1v1h-1zm103 0h1v1h-1zm35 0h1v1h-1zm19 0h1v1h-1zm-216 1h1v1h-1zm17 0h1v1h-1zm23 0h1v1h-1zm4 0h1v1h-1zm110 0h1v1h-1zm47 0h1v1h-1zm17 0h1v1h-1zm23 0h1v1h-1zm-174 2h1v1h-1zm3 0h1v1h-1zm20 0h1v1h-1zm23 0h1v1h-1zm55 0h1v1h-1zm36 0h1v1h-1zm-197 1h1v1h-1zm54 0h1v1h-1zm127 0h1v1h-1zm10 0h1v1h-1zm17 0h1v1h-1zm6 0h1v1h-1zm-249 1h1v1h-1zm101 0h1v1h-1zm33 0h1v1h-1zm47 0h1v1h-1zm16 0h1v1h-1zm30 0h1v1h-1zm21 0h1v1h-1zm-232 1h1v1h-1zm32 0h1v1h-1zm7 0h1v1h-1zm35 0h1v1h-1zm85 0h1v1h-1zm12 0h1v1h-1zm65 0h1v1h-1zm4 0h1v1h-1zm4 0h1v1h-1zm-252 1h1v1h-1zm33 0h1v1h-1zm59 0h1v1h-1zm34 0h1v1h-1zm36 0h1v1h-1zm5 0h1v1h-1zm14 0h1v1h-1zm-188 1h1v1h-1zm117 0h1v1h-1zm21 0h1v1h-1zm11 0h1v1h-1zm84 0h1v1h-1zm32 0h1v1h-1zm-99 1h1v1h-1zm2 0h1v1h-1zm65 0h1v1h-1zm2 0h1v1h-1zm-208 1h1v1h-1zm36 0h1v1h-1zm16 0h1v1h-1zm8 0h1v1h-1zm7 0h1v1h-1zm98 0h1v1h-1zm47 0h1v1h-1zm15 0h1v1h-1zm1 0h1v1h-1zm31 0h1v1h-1zm-282 1h1v1h-1zm77 0h1v1h-1zm20 0h1v1h-1zm20 0h1v1h-1zm5 0h1v1h-1zm3 0h1v1h-1zm76 0h1v1h-1zm2 0h1v1h-1zm22 0h1v1h-1zm22 0h1v1h-1zm-131 1h1v1h-1zm34 0h1v1h-1zm20 0h1v1h-1zm-161 1h1v1h-1zm62 0h1v1h-1zm14 0h1v1h-1zm80 0h1v1h-1zm53 0h1v1h-1zm-195 1h1v1h-1zm183 0h1v1h-1zm-195 1h1v1h-1zm58 0h1v1h-1zm59 0h1v1h-1zm68 0h1v1h-1zm44 0h1v1h-1zm17 0h1v1h-1zm-253 1h1v1h-1zm4 0h1v1h-1zm144 0h1v1h-1zm-151 1h1v1h-1zm97 0h1v1h-1zm3 0h1v1h-1zm3 0h1v1h-1zm31 0h1v1h-1zm-99 1h1v1h-1zm98 0h1v1h-1zm109 0h1v1h-1zm9 0h1v1h-1zm-226 1h1v1h-1zm16 0h1v1h-1zm114 0h1v1h-1zm2 0h1v1h-1zm16 0h1v1h-1zm22 0h1v1h-1zm10 0h1v1h-1zm12 0h1v1h-1zm-208 1h1v1h-1zm15 0h1v1h-1zm225 0h1v1h-1zm-226 1h1v1h-1zm22 0h1v1h-1zm10 0h1v1h-1zm41 0h1v1h-1zm24 0h1v1h-1zm29 0h1v1h-1zm90 0h1v1h-1zm21 0h1v1h-1zm-206 1h1v1h-1zm14 0h1v1h-1zm25 0h1v1h-1zm12 0h1v1h-1zm64 0h1v1h-1zm22 0h1v1h-1zm1 1h1v1h-1zm23 0h1v1h-1zm-188 1h1v1h-1zm50 0h1v1h-1zm4 0h1v1h-1zm11 0h1v1h-1zm57 0h1v1h-1zm-84 1h1v1h-1zm3 0h1v1h-1zm35 0h1v1h-1zm37 0h1v1h-1zm22 0h1v1h-1zm1 0h1v1h-1zm-119 1h1v1h-1zm40 0h1v1h-1zm55 0h1v1h-1zm10 0h1v1h-1zm89 0h1v1h-1zm-239 1h1v1h-1zm51 0h1v1h-1zm9 0h1v1h-1zm81 0h1v1h-1zm26 0h1v1h-1zm29 0h1v1h-1zm9 0h1v1h-1zm-120 1h1v1h-1zm14 0h1v1h-1zm34 0h1v1h-1zm45 0h1v1h-1zm-142 1h1v1h-1zm3 0h1v1h-1zm21 0h1v1h-1zm66 0h1v1h-1zm18 0h1v1h-1zm7 0h1v1h-1zm18 0h1v1h-1zm39 0h1v1h-1zm36 0h1v1h-1zm-196 1h1v1h-1zm139 0h1v1h-1zm4 0h1v1h-1zm33 0h1v1h-1zm-197 1h1v1h-1zm39 0h1v1h-1zm26 0h1v1h-1zm8 0h1v1h-1zm49 0h1v1h-1zm6 0h1v1h-1zm81 0h1v1h-1zm19 0h1v1h-1zm-208 1h1v1h-1zm6 0h1v1h-1zm53 0h1v1h-1zm61 0h1v1h-1zm3 0h1v1h-1zm46 0h1v1h-1zm29 0h1v1h-1zm-191 1h1v1h-1zm113 0h1v1h-1zm12 0h1v1h-1zm-163 1h1v1h-1zm22 0h1v1h-1zm8 0h1v1h-1zm21 0h1v1h-1zm1 0h1v1h-1zm66 0h1v1h-1zm10 0h1v1h-1zm56 0h1v1h-1zm-196 1h1v1h-1zm23 0h1v1h-1zm4 0h1v1h-1zm148 0h1v1h-1zm32 0h1v1h-1zm-35 1h1v1h-1zm34 0h1v1h-1zm-65 1h1v1h-1zm8 0h1v1h-1zm70 0h1v1h-1zm-226 1h1v1h-1zm65 0h1v1h-1zm12 0h1v1h-1zm32 0h1v1h-1zm65 0h1v1h-1zm16 0h1v1h-1zm27 0h1v1h-1zm-218 1h1v1h-1zm32 0h1v1h-1zm23 0h1v1h-1zm15 0h1v1h-1zm27 0h1v1h-1zm26 0h1v1h-1zm30 0h1v1h-1zm76 0h1v1h-1zm-225 1h1v1h-1zm24 0h1v1h-1zm19 0h1v1h-1zm13 0h1v1h-1zm4 0h1v1h-1zm37 0h1v1h-1zm-84 1h1v1h-1zm33 0h1v1h-1zm11 0h1v1h-1zm22 0h1v1h-1zm16 0h1v1h-1zm20 0h1v1h-1zm17 0h1v1h-1zm36 0h1v1h-1zm-130 1h1v1h-1zm110 0h1v1h-1zm8 0h1v1h-1zm46 0h1v1h-1zm13 0h1v1h-1zm41 0h1v1h-1zm-237 1h1v1h-1zm7 0h1v1h-1zm2 0h1v1h-1zm72 0h1v1h-1zm13 0h1v1h-1zm14 0h1v1h-1zm146 0h1v1h-1zm-285 1h1v1h-1zm119 0h1v1h-1zm12 0h1v1h-1zm5 0h1v1h-1zm53 0h1v1h-1zm-36 1h1v1h-1zm31 0h1v1h-1zm19 0h1v1h-1zm14 0h1v1h-1zm17 0h1v1h-1zm-101 1h1v1h-1zm28 0h1v1h-1zm60 0h1v1h-1zm-183 1h1v1h-1zm33 0h1v1h-1zm183 0h1v1h-1zm28 0h1v1h-1zm-266 1h1v1h-1zm152 0h1v1h-1zm-102 1h1v1h-1zm76 0h1v1h-1zm96 0h1v1h-1zm-224 1h1v1h-1zm39 0h1v1h-1zm15 0h1v1h-1zm11 0h1v1h-1zm11 0h1v1h-1zm26 0h1v1h-1zm74 0h1v1h-1zm72 0h1v1h-1zm13 0h1v1h-1zm-271 1h1v1h-1zm161 0h1v1h-1zm21 0h1v1h-1zm16 0h1v1h-1zm-122 1h1v1h-1zm32 0h1v1h-1zm4 0h1v1h-1zm19 0h1v1h-1zm4 0h1v1h-1zm112 0h1v1h-1zm-247 1h1v1h-1zm30 0h1v1h-1zm20 0h1v1h-1zm1 0h1v1h-1zm86 0h1v1h-1zm50 0h1v1h-1zm16 0h1v1h-1zm19 0h1v1h-1zm21 0h1v1h-1zm-131 1h1v1h-1zm31 0h1v1h-1zm77 0h1v1h-1zm-214 1h1v1h-1zm62 0h1v1h-1zm11 0h1v1h-1zm31 0h1v1h-1zm53 0h1v1h-1zm34 0h1v1h-1zm5 0h1v1h-1zm29 0h1v1h-1zm30 0h1v1h-1zm-202 1h1v1h-1zm7 0h1v1h-1zm41 0h1v1h-1zm84 0h1v1h-1zm40 0h1v1h-1zm-187 1h1v1h-1zm11 0h1v1h-1zm17 0h1v1h-1zm14 0h1v1h-1zm130 0h1v1h-1zm-152 1h1v1h-1zm17 0h1v1h-1zm10 0h1v1h-1zm2 0h1v1h-1zm9 0h1v1h-1zm121 0h1v1h-1zm-148 1h1v1h-1zm102 0h1v1h-1zm-173 1h1v1h-1zm15 0h1v1h-1zm51 0h1v1h-1zm38 0h1v1h-1zm17 0h1v1h-1zm22 0h1v1h-1zm4 0h1v1h-1zm105 0h1v1h-1zm-260 1h1v1h-1zm65 0h1v1h-1zm26 0h1v1h-1zm70 0h1v1h-1zm33 0h1v1h-1zm-33 1h1v1h-1zm47 0h1v1h-1zm-143 1h1v1h-1zm40 0h1v1h-1zm35 0h1v1h-1zm34 0h1v1h-1zm73 0h1v1h-1zm-227 1h1v1h-1zm81 0h1v1h-1zm113 0h1v1h-1zm49 0h1v1h-1zm-245 1h1v1h-1zm1 0h1v1h-1zm40 0h1v1h-1zm75 0h1v1h-1zm108 0h1v1h-1zm-225 1h1v1h-1zm181 0h1v1h-1zm32 0h1v1h-1zm-145 1h1v1h-1zm16 0h1v1h-1zm38 0h1v1h-1zm11 0h1v1h-1zm70 0h1v1h-1zm-191 1h1v1h-1zm85 0h1v1h-1zm62 0h1v1h-1zm37 0h1v1h-1zm13 0h1v1h-1zm53 0h1v1h-1zm-160 1h1v1h-1zm8 0h1v1h-1zm141 0h1v1h-1zm-278 1h1v1h-1zm40 0h1v1h-1zm20 0h1v1h-1zm11 0h1v1h-1zm62 0h1v1h-1zm28 0h1v1h-1zm12 0h1v1h-1zm8 0h1v1h-1zm68 0h1v1h-1zm2 0h1v1h-1zm-230 1h1v1h-1zm3 0h1v1h-1zm32 0h1v1h-1zm28 0h1v1h-1zm92 0h1v1h-1zm6 0h1v1h-1zm4 0h1v1h-1zm4 0h1v1h-1zm18 0h1v1h-1zm54 0h1v1h-1zm-247 1h1v1h-1zm10 0h1v1h-1zm23 0h1v1h-1zm5 0h1v1h-1zm40 0h1v1h-1zm15 0h1v1h-1zm73 0h1v1h-1zm79 0h1v1h-1zm-236 1h1v1h-1zm31 0h1v1h-1zm20 0h1v1h-1zm103 0h1v1h-1zm22 0h1v1h-1zm5 0h1v1h-1zm-186 1h1v1h-1zm43 0h1v1h-1zm43 0h1v1h-1zm33 0h1v1h-1zm18 0h1v1h-1zm24 0h1v1h-1zm10 0h1v1h-1zm26 0h1v1h-1zm59 0h1v1h-1zm3 0h1v1h-1zm-266 1h1v1h-1zm64 0h1v1h-1zm31 0h1v1h-1zm12 0h1v1h-1zm18 0h1v1h-1zm9 0h1v1h-1zm3 0h1v1h-1zm61 0h1v1h-1zm2 0h1v1h-1zm36 0h1v1h-1zm-213 1h1v1h-1zm81 0h1v1h-1zm16 0h1v1h-1zm27 0h1v1h-1zm-118 1h1v1h-1zm22 0h1v1h-1zm37 0h1v1h-1zm5 0h1v1h-1zm132 0h1v1h-1zm-199 1h1v1h-1zm3 0h1v1h-1zm5 0h1v1h-1zm33 0h1v1h-1zm-78 1h1v1h-1zm52 0h1v1h-1zm13 0h1v1h-1zm20 0h1v1h-1zm43 0h1v1h-1zm37 0h1v1h-1zm38 0h1v1h-1zm13 0h1v1h-1zm18 0h1v1h-1zm37 0h1v1h-1zm-248 1h1v1h-1zm15 0h1v1h-1zm35 0h1v1h-1zm42 0h1v1h-1zm32 0h1v1h-1zm18 0h1v1h-1zm47 0h1v1h-1zm56 0h1v1h-1zm-250 1h1v1h-1zm43 0h1v1h-1zm163 0h1v1h-1zm-203 1h1v1h-1zm1 0h1v1h-1zm31 0h1v1h-1zm35 0h1v1h-1zm79 0h1v1h-1zm46 0h1v1h-1zm-209 1h1v1h-1zm41 0h1v1h-1zm48 0h1v1h-1zm26 0h1v1h-1zm91 0h1v1h-1zm48 0h1v1h-1zm4 0h1v1h-1zm-260 1h1v1h-1zm4 0h1v1h-1zm45 0h1v1h-1zm53 0h1v1h-1zm27 0h1v1h-1zm36 0h1v1h-1zm13 0h1v1h-1zm-180 1h1v1h-1zm56 0h1v1h-1zm12 0h1v1h-1zm129 0h1v1h-1zm-97 1h1v1h-1zm81 0h1v1h-1zm-29 1h1v1h-1zm15 0h1v1h-1zm23 0h1v1h-1zm4 0h1v1h-1zm39 0h1v1h-1zm29 0h1v1h-1zm-267 1h1v1h-1zm20 0h1v1h-1zm5 0h1v1h-1zm2 0h1v1h-1zm7 0h1v1h-1zm84 0h1v1h-1zm28 0h1v1h-1zm10 0h1v1h-1zm59 0h1v1h-1zm11 0h1v1h-1zm38 0h1v1h-1zm-215 1h1v1h-1zm55 0h1v1h-1zm74 0h1v1h-1zm32 0h1v1h-1zm41 0h1v1h-1zm22 0h1v1h-1zm-251 1h1v1h-1zm56 0h1v1h-1zm32 0h1v1h-1zm66 0h1v1h-1zm32 0h1v1h-1zm15 0h1v1h-1zm-197 1h1v1h-1zm59 0h1v1h-1zm31 0h1v1h-1zm3 0h1v1h-1zm112 0h1v1h-1zm18 0h1v1h-1zm-223 1h1v1h-1zm38 0h1v1h-1zm1 0h1v1h-1zm55 0h1v1h-1zm36 0h1v1h-1zm63 0h1v1h-1zm11 0h1v1h-1zm37 0h1v1h-1zm-258 1h1v1h-1zm19 0h1v1h-1zm10 0h1v1h-1zm80 0h1v1h-1zm73 0h1v1h-1zm1 0h1v1h-1zm61 0h1v1h-1zm1 0h1v1h-1zm-199 1h1v1h-1zm16 0h1v1h-1zm22 0h1v1h-1zm63 0h1v1h-1zm38 0h1v1h-1zm-175 1h1v1h-1zm73 0h1v1h-1zm8 0h1v1h-1zm37 0h1v1h-1zm123 0h1v1h-1zm5 0h1v1h-1zm-254 1h1v1h-1zm98 0h1v1h-1zm52 0h1v1h-1zm6 0h1v1h-1zm8 0h1v1h-1zm9 0h1v1h-1zm69 0h1v1h-1zm15 0h1v1h-1zm-248 1h1v1h-1zm47 0h1v1h-1zm34 0h1v1h-1zm26 0h1v1h-1zm6 0h1v1h-1zm22 0h1v1h-1zm7 0h1v1h-1zm33 0h1v1h-1zm14 0h1v1h-1zm-216 1h1v1h-1zm39 0h1v1h-1zm10 0h1v1h-1zm1 0h1v1h-1zm6 0h1v1h-1zm3 0h1v1h-1zm84 0h1v1h-1zm57 0h1v1h-1zm54 0h1v1h-1zm-224 1h1v1h-1zm101 0h1v1h-1zm32 0h1v1h-1zm105 0h1v1h-1zm-224 1h1v1h-1zm21 0h1v1h-1zm51 0h1v1h-1zm30 0h1v1h-1zm51 0h1v1h-1zm90 0h1v1h-1zm-223 1h1v1h-1zm28 0h1v1h-1zm17 0h1v1h-1zm43 0h1v1h-1zm69 0h1v1h-1zm2 0h1v1h-1zm41 0h1v1h-1zm-119 1h1v1h-1zm38 0h1v1h-1zm56 0h1v1h-1zm19 0h1v1h-1zm-221 1h1v1h-1zm78 0h1v1h-1zm3 0h1v1h-1zm5 0h1v1h-1zm79 0h1v1h-1zm3 0h1v1h-1zm45 0h1v1h-1zm9 0h1v1h-1zm3 0h1v1h-1zm-229 1h1v1h-1zm177 0h1v1h-1zm41 0h1v1h-1zm32 0h1v1h-1zm-273 1h1v1h-1zm11 0h1v1h-1zm99 0h1v1h-1zm41 0h1v1h-1zm69 0h1v1h-1zm29 0h1v1h-1zm-231 1h1v1h-1zm55 0h1v1h-1zm82 0h1v1h-1zm12 0h1v1h-1zm13 0h1v1h-1zm-102 1h1v1h-1zm36 0h1v1h-1zm7 0h1v1h-1zm22 0h1v1h-1zm25 0h1v1h-1zm69 0h1v1h-1zm9 0h1v1h-1zm-190 1h1v1h-1zm136 0h1v1h-1zm34 0h1v1h-1zm22 0h1v1h-1zm-127 1h1v1h-1zm23 0h1v1h-1zm30 0h1v1h-1zm1 0h1v1h-1zm5 0h1v1h-1zm3 0h1v1h-1zm22 0h1v1h-1zm-183 1h1v1h-1zm15 0h1v1h-1zm7 0h1v1h-1zm73 0h1v1h-1zm19 0h1v1h-1zm49 0h1v1h-1zm16 0h1v1h-1zm1 0h1v1h-1zm46 0h1v1h-1zm8 0h1v1h-1zm2 0h1v1h-1zm-160 1h1v1h-1zm24 0h1v1h-1zm12 0h1v1h-1zm4 0h1v1h-1zm9 0h1v1h-1zm74 0h1v1h-1zm1 0h1v1h-1zm2 0h1v1h-1zm-210 1h1v1h-1zm97 0h1v1h-1zm28 0h1v1h-1zm4 0h1v1h-1zm82 0h1v1h-1zm3 0h1v1h-1zm23 0h1v1h-1zm17 0h1v1h-1zm-186 1h1v1h-1zm2 0h1v1h-1zm31 0h1v1h-1zm15 0h1v1h-1zm13 0h1v1h-1zm-146 1h1v1h-1zm10 0h1v1h-1zm75 0h1v1h-1zm60 0h1v1h-1zm2 0h1v1h-1zm117 0h1v1h-1zm-261 1h1v1h-1zm9 0h1v1h-1zm43 0h1v1h-1zm43 0h1v1h-1zm34 0h1v1h-1zm24 0h1v1h-1zm45 0h1v1h-1zm70 0h1v1h-1zm-265 1h1v1h-1zm92 0h1v1h-1zm48 0h1v1h-1zm9 0h1v1h-1zm114 0h1v1h-1zm11 0h1v1h-1zm-256 1h1v1h-1zm34 0h1v1h-1zm22 0h1v1h-1zm35 0h1v1h-1zm92 0h1v1h-1zm41 0h1v1h-1zm-239 1h1v1h-1zm78 0h1v1h-1zm80 0h1v1h-1zm24 0h1v1h-1zm45 0h1v1h-1zm30 0h1v1h-1zm-213 1h1v1h-1zm83 0h1v1h-1zm23 0h1v1h-1zm32 0h1v1h-1zm-141 1h1v1h-1zm27 0h1v1h-1zm32 0h1v1h-1zm30 0h1v1h-1zm28 0h1v1h-1zm11 0h1v1h-1zm15 0h1v1h-1zm55 0h1v1h-1zm13 0h1v1h-1zm2 0h1v1h-1zm-261 1h1v1h-1zm19 0h1v1h-1zm90 0h1v1h-1zm4 0h1v1h-1zm35 0h1v1h-1zm41 0h1v1h-1zm21 0h1v1h-1zm59 0h1v1h-1zm-207 1h1v1h-1zm30 0h1v1h-1zm12 0h1v1h-1zm33 0h1v1h-1zm41 0h1v1h-1zm-177 1h1v1h-1zm36 0h1v1h-1zm6 0h1v1h-1zm63 0h1v1h-1zm19 0h1v1h-1zm5 0h1v1h-1zm67 0h1v1h-1zm10 0h1v1h-1zm39 0h1v1h-1zm-255 1h1v1h-1zm27 0h1v1h-1zm34 0h1v1h-1zm105 0h1v1h-1zm31 0h1v1h-1zm9 0h1v1h-1zm-213 1h1v1h-1zm81 0h1v1h-1zm136 0h1v1h-1zm19 0h1v1h-1zm-237 1h1v1h-1zm41 0h1v1h-1zm22 0h1v1h-1zm88 0h1v1h-1zm2 0h1v1h-1zm16 0h1v1h-1zm5 0h1v1h-1zm89 0h1v1h-1zm-179 1h1v1h-1zm12 0h1v1h-1zm30 0h1v1h-1zm2 0h1v1h-1zm29 0h1v1h-1zm51 0h1v1h-1zm56 0h1v1h-1zm-225 1h1v1h-1zm167 0h1v1h-1zm17 0h1v1h-1zm-157 1h1v1h-1zm27 0h1v1h-1zm13 0h1v1h-1zm48 0h1v1h-1zm19 0h1v1h-1zm25 0h1v1h-1zm73 0h1v1h-1zm-118 1h1v1h-1zm60 0h1v1h-1zm49 0h1v1h-1zm23 0h1v1h-1zm-223 1h1v1h-1zm29 0h1v1h-1zm70 0h1v1h-1zm86 0h1v1h-1zm-229 1h1v1h-1zm146 0h1v1h-1zm11 0h1v1h-1zm40 0h1v1h-1zm36 0h1v1h-1zm5 0h1v1h-1zm-230 1h1v1h-1zm2 0h1v1h-1zm128 0h1v1h-1zm56 0h1v1h-1zm-154 1h1v1h-1zm5 0h1v1h-1zm78 0h1v1h-1zm5 0h1v1h-1zm30 0h1v1h-1zm6 0h1v1h-1zm19 0h1v1h-1zm5 0h1v1h-1zm35 0h1v1h-1zm22 0h1v1h-1zm22 0h1v1h-1zm-194 1h1v1h-1zm59 0h1v1h-1zm17 0h1v1h-1zm5 0h1v1h-1zm-63 1h1v1h-1zm44 0h1v1h-1zm2 0h1v1h-1zm78 0h1v1h-1zm-195 1h1v1h-1zm50 0h1v1h-1zm32 0h1v1h-1zm8 0h1v1h-1zm31 0h1v1h-1zm5 0h1v1h-1zm21 0h1v1h-1zm-155 1h1v1h-1zm75 0h1v1h-1zm35 0h1v1h-1zm-126 1h1v1h-1zm2 0h1v1h-1zm32 0h1v1h-1zm47 0h1v1h-1zm9 0h1v1h-1zm55 0h1v1h-1zm16 0h1v1h-1zm4 0h1v1h-1zm64 0h1v1h-1zm15 0h1v1h-1zm-239 1h1v1h-1zm38 0h1v1h-1zm82 0h1v1h-1zm12 0h1v1h-1zm53 0h1v1h-1zm23 0h1v1h-1zm6 0h1v1h-1zm39 0h1v1h-1zm-238 1h1v1h-1zm104 0h1v1h-1zm24 0h1v1h-1zm41 0h1v1h-1zm-128 1h1v1h-1zm4 0h1v1h-1zm22 0h1v1h-1zm3 0h1v1h-1zm22 0h1v1h-1zm20 0h1v1h-1zm58 0h1v1h-1zm18 0h1v1h-1zm-207 1h1v1h-1zm131 0h1v1h-1zm15 0h1v1h-1zm16 0h1v1h-1zm15 0h1v1h-1zm2 0h1v1h-1zm22 0h1v1h-1zm-170 1h1v1h-1zm28 0h1v1h-1zm17 0h1v1h-1zm25 0h1v1h-1zm4 0h1v1h-1zm2 0h1v1h-1zm21 0h1v1h-1zm7 0h1v1h-1zm4 0h1v1h-1zm1 0h1v1h-1zm49 0h1v1h-1zm10 0h1v1h-1zm3 0h1v1h-1zm-212 1h1v1h-1zm11 0h1v1h-1zm55 0h1v1h-1zm1 0h1v1h-1zm16 0h1v1h-1zm16 0h1v1h-1zm14 0h1v1h-1zm76 0h1v1h-1zm42 0h1v1h-1zm22 0h1v1h-1zm6 0h1v1h-1zm-250 1h1v1h-1zm10 0h1v1h-1zm62 0h1v1h-1zm12 0h1v1h-1zm6 0h1v1h-1zm5 0h1v1h-1zm1 0h1v1h-1zm4 0h1v1h-1zm4 0h1v1h-1zm14 0h1v1h-1zm8 0h1v1h-1zm3 0h1v1h-1zm3 0h1v1h-1zm2 0h1v1h-1zm2 0h1v1h-1zm1 0h1v1h-1zm34 0h1v1h-1zm61 0h1v1h-1zm14 0h1v1h-1zm-254 1h1v1h-1zm9 0h1v1h-1zm14 0h1v1h-1zm28 0h1v1h-1zm4 0h1v1h-1zm46 0h1v1h-1zm15 0h1v1h-1zm22 0h1v1h-1zm10 0h1v1h-1zm5 0h1v1h-1zm44 0h1v1h-1zm29 0h1v1h-1zm31 0h1v1h-1zm-98 1h1v1h-1zm68 0h1v1h-1zm5 0h1v1h-1zm6 0h1v1h-1zm-134 1h1v1h-1zm3 0h1v1h-1zm4 0h1v1h-1zm50 0h1v1h-1zm114 0h1v1h-1zm-182 1h1v1h-1zm9 0h1v1h-1zm14 0h1v1h-1zm26 0h1v1h-1zm14 0h1v1h-1zm32 0h1v1h-1zm25 0h1v1h-1zm-177 1h1v1h-1zm5 0h1v1h-1zm17 0h1v1h-1zm35 0h1v1h-1zm1 0h1v1h-1zm2 0h1v1h-1zm7 0h1v1h-1zm52 0h1v1h-1zm2 0h1v1h-1zm5 0h1v1h-1zm65 0h1v1h-1zm13 0h1v1h-1zm-147 1h1v1h-1zm9 0h1v1h-1zm23 0h1v1h-1zm3 0h1v1h-1zm7 0h1v1h-1zm4 0h1v1h-1zm4 0h1v1h-1zm7 0h1v1h-1zm67 0h1v1h-1zm38 0h1v1h-1zm-212 1h1v1h-1zm61 0h1v1h-1zm2 0h1v1h-1zm45 0h1v1h-1zm1 0h1v1h-1zm8 0h1v1h-1zm27 0h1v1h-1zm7 0h1v1h-1zm-116 1h1v1h-1zm13 0h1v1h-1zm1 0h1v1h-1zm3 0h1v1h-1zm10 0h1v1h-1zm1 0h1v1h-1zm28 0h1v1h-1zm4 0h1v1h-1zm9 0h1v1h-1zm4 0h1v1h-1zm40 0h1v1h-1zm80 0h1v1h-1zm-129 1h1v1h-1zm2 0h1v1h-1zm12 0h1v1h-1zm3 0h1v1h-1zm29 0h1v1h-1zm27 0h1v1h-1zm28 0h1v1h-1zm-251 1h1v1h-1zm5 0h1v1h-1zm12 0h1v1h-1zm78 0h1v1h-1zm3 0h1v1h-1zm4 0h1v1h-1zm8 0h1v1h-1zm5 0h1v1h-1zm47 0h1v1h-1zm-134 1h1v1h-1zm6 0h1v1h-1zm12 0h1v1h-1zm58 0h1v1h-1zm7 0h1v1h-1zm42 0h1v1h-1zm28 0h1v1h-1zm8 0h1v1h-1zm2 0h1v1h-1zm29 0h1v1h-1zm11 0h1v1h-1zm44 0h1v1h-1zm-238 1h1v1h-1zm24 0h1v1h-1zm60 0h1v1h-1zm1 0h1v1h-1zm32 0h1v1h-1zm122 0h1v1h-1zm-250 1h1v1h-1zm61 0h1v1h-1zm16 0h1v1h-1zm10 0h1v1h-1zm67 0h1v1h-1zm46 0h1v1h-1zm21 0h1v1h-1zm-241 1h1v1h-1zm102 0h1v1h-1zm39 0h1v1h-1zm66 0h1v1h-1zm2 0h1v1h-1zm19 0h1v1h-1zm1 0h1v1h-1zm-230 1h1v1h-1zm97 0h1v1h-1zm97 0h1v1h-1zm72 0h1v1h-1zm-213 1h1v1h-1zm19 0h1v1h-1zm148 0h1v1h-1zm-104 1h1v1h-1zm18 0h1v1h-1zm12 0h1v1h-1zm4 0h1v1h-1zm31 0h1v1h-1zm-24 1h1v1h-1zm77 0h1v1h-1zm18 0h1v1h-1zm2 0h1v1h-1zm-174 1h1v1h-1zm17 0h1v1h-1zm43 0h1v1h-1zm112 0h1v1h-1zm-154 1h1v1h-1zm-64 1h1v1h-1zm9 0h1v1h-1zm79 0h1v1h-1zm106 0h1v1h-1zm32 0h1v1h-1zm-235 1h1v1h-1zm20 0h1v1h-1zm141 0h1v1h-1zm30 0h1v1h-1zm18 0h1v1h-1zm24 0h1v1h-1zm-231 1h1v1h-1zm1 0h1v1h-1zm46 0h1v1h-1zm56 0h1v1h-1zm12 0h1v1h-1zm38 0h1v1h-1zm62 0h1v1h-1zm3 0h1v1h-1zm-241 1h1v1h-1zm16 0h1v1h-1zm13 0h1v1h-1zm15 0h1v1h-1zm44 0h1v1h-1zm20 0h1v1h-1zm55 0h1v1h-1zm41 0h1v1h-1zm41 0h1v1h-1zm21 0h1v1h-1zm-276 1h1v1h-1zm34 0h1v1h-1zm34 0h1v1h-1zm25 0h1v1h-1zm27 0h1v1h-1zm70 0h1v1h-1zm15 0h1v1h-1zm29 0h1v1h-1zm-204 1h1v1h-1zm131 0h1v1h-1zm15 0h1v1h-1zm5 0h1v1h-1zm27 0h1v1h-1zm-170 1h1v1h-1zm68 0h1v1h-1zm55 0h1v1h-1zm37 0h1v1h-1zm3 0h1v1h-1zm44 0h1v1h-1zm-243 1h1v1h-1zm61 0h1v1h-1zm33 0h1v1h-1zm33 0h1v1h-1zm58 0h1v1h-1zm40 0h1v1h-1zm-165 1h1v1h-1zm19 0h1v1h-1zm92 0h1v1h-1zm4 0h1v1h-1zm14 0h1v1h-1zm27 0h1v1h-1zm-183 1h1v1h-1zm10 0h1v1h-1zm82 0h1v1h-1zm4 0h1v1h-1zm101 0h1v1h-1zm-229 1h1v1h-1zm62 0h1v1h-1zm19 0h1v1h-1zm16 0h1v1h-1zm36 0h1v1h-1zm1 0h1v1h-1zm24 0h1v1h-1zm57 0h1v1h-1zm8 0h1v1h-1zm31 0h1v1h-1zm-252 1h1v1h-1zm155 0h1v1h-1zm45 0h1v1h-1zm-115 1h1v1h-1zm92 0h1v1h-1zm9 0h1v1h-1zm9 0h1v1h-1zm30 0h1v1h-1zm2 0h1v1h-1zm-207 1h1v1h-1zm18 0h1v1h-1zm110 0h1v1h-1zm56 0h1v1h-1zm75 0h1v1h-1zm-257 1h1v1h-1zm167 0h1v1h-1zm21 0h1v1h-1zm16 0h1v1h-1zm22 0h1v1h-1zm-239 1h1v1h-1zm38 0h1v1h-1zm126 0h1v1h-1zm3 0h1v1h-1zm72 0h1v1h-1zm-230 1h1v1h-1zm5 0h1v1h-1zm57 0h1v1h-1zm37 0h1v1h-1zm95 0h1v1h-1zm1 0h1v1h-1zm1 0h1v1h-1zm17 0h1v1h-1zm16 0h1v1h-1zm2 0h1v1h-1zm-213 1h1v1h-1zm36 0h1v1h-1zm33 0h1v1h-1zm26 0h1v1h-1zm9 0h1v1h-1zm71 0h1v1h-1zm4 0h1v1h-1zm5 0h1v1h-1zm-210 1h1v1h-1zm35 0h1v1h-1zm3 0h1v1h-1zm71 0h1v1h-1zm57 0h1v1h-1zm5 0h1v1h-1zm29 0h1v1h-1zm54 0h1v1h-1zm-199 1h1v1h-1zm39 0h1v1h-1zm48 0h1v1h-1zm57 0h1v1h-1zm-167 1h1v1h-1zm27 0h1v1h-1zm87 0h1v1h-1zm24 0h1v1h-1zm66 0h1v1h-1zm14 0h1v1h-1zm-242 1h1v1h-1zm10 0h1v1h-1zm21 0h1v1h-1zm175 0h1v1h-1zm-225 1h1v1h-1zm117 0h1v1h-1zm47 0h1v1h-1zm-159 1h1v1h-1zm65 0h1v1h-1zm7 0h1v1h-1zm41 0h1v1h-1zm36 0h1v1h-1zm59 0h1v1h-1zm-216 1h1v1h-1zm12 0h1v1h-1zm113 0h1v1h-1zm12 0h1v1h-1zm20 1h1v1h-1zm9 0h1v1h-1zm-54 1h1v1h-1zm7 0h1v1h-1zm38 0h1v1h-1zm15 0h1v1h-1zm89 0h1v1h-1zm1 0h1v1h-1zm-138 1h1v1h-1zm77 0h1v1h-1zm43 0h1v1h-1zm3 0h1v1h-1zm-197 1h1v1h-1zm60 0h1v1h-1zm10 0h1v1h-1zm4 0h1v1h-1zm80 0h1v1h-1zm28 0h1v1h-1zm-216 1h1v1h-1zm60 0h1v1h-1zm97 0h1v1h-1zm87 0h1v1h-1zm-214 1h1v1h-1zm35 0h1v1h-1zm7 0h1v1h-1zm8 0h1v1h-1zm2 0h1v1h-1zm5 0h1v1h-1zm5 0h1v1h-1zm22 0h1v1h-1zm20 0h1v1h-1zm15 0h1v1h-1zm34 0h1v1h-1zm2 0h1v1h-1zm40 0h1v1h-1zm-184 1h1v1h-1zm47 0h1v1h-1zm10 0h1v1h-1zm17 0h1v1h-1zm57 0h1v1h-1zm72 0h1v1h-1zm-167 1h1v1h-1zm22 0h1v1h-1zm6 0h1v1h-1zm3 0h1v1h-1zm8 0h1v1h-1zm24 0h1v1h-1zm6 0h1v1h-1zm53 0h1v1h-1zm11 0h1v1h-1zm10 0h1v1h-1zm37 0h1v1h-1zm-178 1h1v1h-1zm-24 1h1v1h-1zm69 0h1v1h-1zm11 0h1v1h-1zm7 0h1v1h-1zm2 0h1v1h-1zm6 0h1v1h-1zm5 0h1v1h-1zm-169 1h1v1h-1zm18 0h1v1h-1zm5 0h1v1h-1zm7 0h1v1h-1zm100 0h1v1h-1zm138 0h1v1h-1zm-270 1h1v1h-1zm40 0h1v1h-1zm42 0h1v1h-1zm106 0h1v1h-1zm55 0h1v1h-1zm-190 1h1v1h-1zm16 0h1v1h-1zm8 0h1v1h-1zm61 0h1v1h-1zm25 0h1v1h-1zm-145 1h1v1h-1zm64 0h1v1h-1zm32 0h1v1h-1zm58 0h1v1h-1zm50 0h1v1h-1zm-103 1h1v1h-1zm21 0h1v1h-1zm32 0h1v1h-1zm14 0h1v1h-1zm13 0h1v1h-1zm5 0h1v1h-1zm-208 1h1v1h-1zm3 0h1v1h-1zm6 0h1v1h-1zm99 0h1v1h-1zm16 0h1v1h-1zm78 0h1v1h-1zm43 0h1v1h-1zm9 0h1v1h-1zm-222 1h1v1h-1zm123 0h1v1h-1zm-154 1h1v1h-1zm28 0h1v1h-1zm75 0h1v1h-1zm26 0h1v1h-1zm94 0h1v1h-1zm-189 1h1v1h-1zm56 0h1v1h-1zm34 0h1v1h-1zm48 0h1v1h-1zm39 0h1v1h-1zm-71 1h1v1h-1zm20 0h1v1h-1zm1 0h1v1h-1zm1 0h1v1h-1zm24 0h1v1h-1zm61 0h1v1h-1zm3 0h1v1h-1zm-197 1h1v1h-1zm15 0h1v1h-1zm50 0h1v1h-1zm24 0h1v1h-1zm-93 1h1v1h-1zm11 0h1v1h-1zm103 0h1v1h-1zm2 0h1v1h-1zm22 0h1v1h-1zm54 0h1v1h-1zm-212 1h1v1h-1zm22 0h1v1h-1zm33 0h1v1h-1zm38 0h1v1h-1zm66 0h1v1h-1zm3 0h1v1h-1zm21 0h1v1h-1zm10 0h1v1h-1zm-221 1h1v1h-1zm4 0h1v1h-1zm225 0h1v1h-1zm3 0h1v1h-1zm-216 1h1v1h-1zm33 0h1v1h-1zm106 0h1v1h-1zm5 0h1v1h-1zm66 0h1v1h-1zm20 0h1v1h-1zm11 0h1v1h-1zm8 0h1v1h-1zm-269 1h1v1h-1zm26 0h1v1h-1zm149 0h1v1h-1zm13 0h1v1h-1zm43 0h1v1h-1zm-211 1h1v1h-1zm73 0h1v1h-1zm6 0h1v1h-1zm9 0h1v1h-1zm22 0h1v1h-1zm3 0h1v1h-1zm94 0h1v1h-1zm-204 1h1v1h-1zm16 0h1v1h-1zm7 0h1v1h-1zm16 0h1v1h-1zm17 0h1v1h-1zm75 0h1v1h-1zm3 0h1v1h-1zm113 0h1v1h-1zm-154 1h1v1h-1zm68 0h1v1h-1zm28 0h1v1h-1zm40 0h1v1h-1zm-165 1h1v1h-1zm62 0h1v1h-1zm47 0h1v1h-1zm4 0h1v1h-1zm33 0h1v1h-1zm4 0h1v1h-1zm14 0h1v1h-1zm12 0h1v1h-1zm-258 1h1v1h-1zm13 0h1v1h-1zm68 0h1v1h-1zm22 0h1v1h-1zm28 0h1v1h-1zm43 0h1v1h-1zm-118 1h1v1h-1zm115 0h1v1h-1zm10 0h1v1h-1zm9 0h1v1h-1zm54 0h1v1h-1zm-231 1h1v1h-1zm27 0h1v1h-1zm115 0h1v1h-1zm32 0h1v1h-1zm-189 1h1v1h-1zm87 0h1v1h-1zm7 0h1v1h-1zm39 0h1v1h-1zm38 0h1v1h-1zm-93 1h1v1h-1zm75 0h1v1h-1zm7 0h1v1h-1zm21 0h1v1h-1zm40 0h1v1h-1zm-197 1h1v1h-1zm26 0h1v1h-1zm50 0h1v1h-1zm4 0h1v1h-1zm127 0h1v1h-1zm-231 1h1v1h-1zm74 0h1v1h-1zm7 0h1v1h-1zm20 0h1v1h-1zm34 0h1v1h-1zm-71 1h1v1h-1zm13 0h1v1h-1zm7 0h1v1h-1zm22 0h1v1h-1zm22 0h1v1h-1zm76 0h1v1h-1zm-197 1h1v1h-1zm82 0h1v1h-1zm68 0h1v1h-1zm65 0h1v1h-1zm3 0h1v1h-1zm32 0h1v1h-1zm-224 1h1v1h-1zm40 0h1v1h-1zm106 0h1v1h-1zm62 0h1v1h-1zm-77 1h1v1h-1zm3 0h1v1h-1zm50 0h1v1h-1zm-207 1h1v1h-1zm54 0h1v1h-1zm26 0h1v1h-1zm37 0h1v1h-1zm89 0h1v1h-1zm8 0h1v1h-1zm11 0h1v1h-1zm-190 1h1v1h-1zm17 0h1v1h-1zm3 0h1v1h-1zm187 0h1v1h-1zm-251 1h1v1h-1zm18 0h1v1h-1zm10 0h1v1h-1zm89 0h1v1h-1zm24 0h1v1h-1zm26 0h1v1h-1zm26 0h1v1h-1zm5 0h1v1h-1zm-144 1h1v1h-1zm55 0h1v1h-1zm15 0h1v1h-1zm19 0h1v1h-1zm23 0h1v1h-1zm58 0h1v1h-1zm-204 1h1v1h-1zm29 0h1v1h-1zm111 0h1v1h-1zm51 0h1v1h-1zm-196 1h1v1h-1zm9 0h1v1h-1zm96 0h1v1h-1zm134 0h1v1h-1zm-225 1h1v1h-1zm6 0h1v1h-1zm41 0h1v1h-1zm35 0h1v1h-1zm24 0h1v1h-1zm21 0h1v1h-1zm31 0h1v1h-1zm59 0h1v1h-1zm-206 1h1v1h-1zm39 0h1v1h-1zm14 0h1v1h-1zm27 0h1v1h-1zm98 0h1v1h-1zm-193 1h1v1h-1zm51 0h1v1h-1zm98 0h1v1h-1zm22 0h1v1h-1zm52 0h1v1h-1zm-221 1h1v1h-1zm153 0h1v1h-1zm24 0h1v1h-1zm15 0h1v1h-1zm3 0h1v1h-1zm31 0h1v1h-1zm-264 1h1v1h-1zm120 0h1v1h-1zm23 0h1v1h-1zm1 0h1v1h-1zm32 0h1v1h-1zm87 0h1v1h-1zm-198 1h1v1h-1zm1 0h1v1h-1zm48 0h1v1h-1zm24 0h1v1h-1zm47 0h1v1h-1zm33 0h1v1h-1zm4 0h1v1h-1zm5 0h1v1h-1zm5 0h1v1h-1zm-242 1h1v1h-1zm164 0h1v1h-1zm25 0h1v1h-1zm14 0h1v1h-1zm47 0h1v1h-1zm-182 1h1v1h-1zm13 0h1v1h-1zm26 0h1v1h-1zm9 0h1v1h-1zm29 0h1v1h-1zm26 0h1v1h-1zm12 0h1v1h-1zm12 0h1v1h-1zm39 0h1v1h-1zm18 0h1v1h-1zm2 0h1v1h-1zm21 0h1v1h-1zm3 0h1v1h-1zm-235 1h1v1h-1zm51 0h1v1h-1zm35 0h1v1h-1zm75 0h1v1h-1zm4 0h1v1h-1zm58 0h1v1h-1zm-248 1h1v1h-1zm3 0h1v1h-1zm22 0h1v1h-1zm149 0h1v1h-1zm-166 1h1v1h-1zm14 0h1v1h-1zm16 0h1v1h-1zm19 0h1v1h-1zm6 0h1v1h-1zm1 0h1v1h-1zm14 0h1v1h-1zm9 0h1v1h-1zm16 0h1v1h-1zm11 0h1v1h-1zm8 0h1v1h-1zm23 0h1v1h-1zm94 0h1v1h-1zm-123 1h1v1h-1zm23 0h1v1h-1zm48 0h1v1h-1zm-161 1h1v1h-1zm53 0h1v1h-1zm25 0h1v1h-1zm13 0h1v1h-1zm25 0h1v1h-1zm49 0h1v1h-1zm15 0h1v1h-1zm19 0h1v1h-1zm10 0h1v1h-1zm-229 1h1v1h-1zm59 0h1v1h-1zm19 0h1v1h-1zm13 0h1v1h-1zm2 0h1v1h-1zm37 0h1v1h-1zm6 0h1v1h-1zm-109 1h1v1h-1zm14 0h1v1h-1zm61 0h1v1h-1zm33 0h1v1h-1zm2 0h1v1h-1zm24 0h1v1h-1zm48 0h1v1h-1zm-195 1h1v1h-1zm33 0h1v1h-1zm10 0h1v1h-1zm68 0h1v1h-1zm2 0h1v1h-1zm9 0h1v1h-1zm7 0h1v1h-1zm98 0h1v1h-1zm-244 1h1v1h-1zm66 0h1v1h-1zm75 0h1v1h-1zm95 0h1v1h-1zm-243 1h1v1h-1zm18 0h1v1h-1zm15 0h1v1h-1zm41 0h1v1h-1zm62 0h1v1h-1zm-135 1h1v1h-1zm17 0h1v1h-1zm13 0h1v1h-1zm25 0h1v1h-1zm19 0h1v1h-1zm157 0h1v1h-1zm-206 1h1v1h-1zm50 0h1v1h-1zm25 0h1v1h-1zm51 0h1v1h-1zm25 0h1v1h-1zm62 0h1v1h-1zm-199 1h1v1h-1zm45 0h1v1h-1zm50 0h1v1h-1zm10 0h1v1h-1zm6 0h1v1h-1zm58 0h1v1h-1zm37 0h1v1h-1zm18 0h1v1h-1zm-226 1h1v1h-1zm5 0h1v1h-1zm2 0h1v1h-1zm24 0h1v1h-1zm11 0h1v1h-1zm27 0h1v1h-1zm19 0h1v1h-1zm8 0h1v1h-1zm42 0h1v1h-1zm17 0h1v1h-1zm18 0h1v1h-1zm41 0h1v1h-1zm-175 1h1v1h-1zm8 0h1v1h-1zm25 0h1v1h-1zm66 0h1v1h-1zm36 0h1v1h-1zm6 0h1v1h-1zm-86 1h1v1h-1zm10 0h1v1h-1zm81 0h1v1h-1zm-220 1h1v1h-1zm8 0h1v1h-1zm51 0h1v1h-1zm55 0h1v1h-1zm26 0h1v1h-1zm40 0h1v1h-1zm18 0h1v1h-1zm14 0h1v1h-1zm-169 1h1v1h-1zm3 1h1v1h-1zm104 0h1v1h-1zm9 0h1v1h-1zm5 0h1v1h-1zm37 0h1v1h-1zm18 0h1v1h-1zm6 0h1v1h-1zm5 0h1v1h-1zm22 0h1v1h-1zm-240 1h1v1h-1zm13 0h1v1h-1zm22 0h1v1h-1zm46 0h1v1h-1zm8 0h1v1h-1zm87 0h1v1h-1zm-159 1h1v1h-1zm56 0h1v1h-1zm34 0h1v1h-1zm42 0h1v1h-1zm9 0h1v1h-1zm22 0h1v1h-1zm13 0h1v1h-1zm3 0h1v1h-1zm14 0h1v1h-1zm29 0h1v1h-1zm-263 1h1v1h-1zm51 0h1v1h-1zm51 0h1v1h-1zm20 0h1v1h-1zm27 0h1v1h-1zm3 0h1v1h-1zm1 0h1v1h-1zm-23 1h1v1h-1zm1 0h1v1h-1zm90 0h1v1h-1zm24 0h1v1h-1zm-211 1h1v1h-1zm24 0h1v1h-1zm8 0h1v1h-1zm73 0h1v1h-1zm96 0h1v1h-1zm-241 1h1v1h-1zm13 0h1v1h-1zm20 0h1v1h-1zm39 0h1v1h-1zm15 0h1v1h-1zm63 0h1v1h-1zm32 0h1v1h-1zm-148 1h1v1h-1zm2 0h1v1h-1zm37 0h1v1h-1zm86 0h1v1h-1zm33 0h1v1h-1zm27 0h1v1h-1zm29 0h1v1h-1zm-210 1h1v1h-1zm28 0h1v1h-1zm3 0h1v1h-1zm14 0h1v1h-1zm8 0h1v1h-1zm22 0h1v1h-1zm17 0h1v1h-1zm54 0h1v1h-1zm5 0h1v1h-1zm10 0h1v1h-1zm-188 1h1v1h-1zm182 0h1v1h-1zm13 0h1v1h-1zm20 0h1v1h-1zm42 0h1v1h-1zm-175 1h1v1h-1zm61 0h1v1h-1zm13 0h1v1h-1zm21 0h1v1h-1zm46 0h1v1h-1zm-152 1h1v1h-1zm58 0h1v1h-1zm80 0h1v1h-1zm11 0h1v1h-1zm14 0h1v1h-1zm-214 1h1v1h-1zm67 0h1v1h-1zm55 0h1v1h-1zm-130 1h1v1h-1zm12 0h1v1h-1zm3 0h1v1h-1zm18 0h1v1h-1zm16 0h1v1h-1zm102 0h1v1h-1zm24 0h1v1h-1zm72 0h1v1h-1zm-281 1h1v1h-1zm18 0h1v1h-1zm12 0h1v1h-1zm10 0h1v1h-1zm66 0h1v1h-1zm29 0h1v1h-1zm31 0h1v1h-1zm57 0h1v1h-1zm46 0h1v1h-1zm3 0h1v1h-1zm9 0h1v1h-1zm-259 1h1v1h-1zm140 0h1v1h-1zm6 0h1v1h-1zm1 0h1v1h-1zm75 0h1v1h-1zm-199 1h1v1h-1zm231 0h1v1h-1zm-231 1h1v1h-1zm26 0h1v1h-1zm11 0h1v1h-1zm88 0h1v1h-1zm7 0h1v1h-1zm-21 1h1v1h-1zm2 0h1v1h-1zm-124 1h1v1h-1zm39 0h1v1h-1zm83 0h1v1h-1zm6 0h1v1h-1zm45 0h1v1h-1zm27 0h1v1h-1zm9 0h1v1h-1zm31 0h1v1h-1zm-259 1h1v1h-1zm44 0h1v1h-1zm5 0h1v1h-1zm14 0h1v1h-1zm58 0h1v1h-1zm64 0h1v1h-1zm15 0h1v1h-1zm-175 1h1v1h-1zm138 0h1v1h-1zm68 0h1v1h-1zm27 0h1v1h-1zm-230 1h1v1h-1zm8 0h1v1h-1zm21 0h1v1h-1zm33 0h1v1h-1zm92 0h1v1h-1zm54 0h1v1h-1zm-224 1h1v1h-1zm28 0h1v1h-1zm46 0h1v1h-1zm43 0h1v1h-1zm116 0h1v1h-1zm4 0h1v1h-1zm-269 2h1v1h-1zm59 0h1v1h-1zm13 0h1v1h-1zm66 0h1v1h-1zm17 0h1v1h-1zm14 0h1v1h-1zm-99 1h1v1h-1zm6 0h1v1h-1zm17 0h1v1h-1zm135 0h1v1h-1zm-144 1h1v1h-1zm6 0h1v1h-1zm41 0h1v1h-1zm30 0h1v1h-1zm28 0h1v1h-1zm46 0h1v1h-1zm3 0h1v1h-1zm-223 1h1v1h-1zm19 0h1v1h-1zm76 0h1v1h-1zm110 0h1v1h-1zm-192 1h1v1h-1zm9 0h1v1h-1zm39 0h1v1h-1zm20 0h1v1h-1zm6 0h1v1h-1zm68 0h1v1h-1zm60 0h1v1h-1zm29 0h1v1h-1zm12 0h1v1h-1zm-247 1h1v1h-1zm37 0h1v1h-1zm103 0h1v1h-1zm6 0h1v1h-1zm9 0h1v1h-1zm55 0h1v1h-1zm-194 1h1v1h-1zm28 0h1v1h-1zm52 0h1v1h-1zm147 0h1v1h-1zm8 0h1v1h-1zm10 0h1v1h-1zm-196 1h1v1h-1zm22 0h1v1h-1zm2 0h1v1h-1zm4 0h1v1h-1zm26 0h1v1h-1zm14 0h1v1h-1zm98 0h1v1h-1zm2 0h1v1h-1zm-231 1h1v1h-1zm74 0h1v1h-1zm63 0h1v1h-1zm33 0h1v1h-1zm12 0h1v1h-1zm18 0h1v1h-1zm-184 1h1v1h-1zm21 0h1v1h-1zm12 0h1v1h-1zm15 0h1v1h-1zm21 0h1v1h-1zm28 0h1v1h-1zm1 0h1v1h-1zm6 0h1v1h-1zm36 0h1v1h-1zm-152 1h1v1h-1zm7 0h1v1h-1zm9 0h1v1h-1zm20 0h1v1h-1zm209 0h1v1h-1zm7 0h1v1h-1zm-223 1h1v1h-1zm49 0h1v1h-1zm46 0h1v1h-1zm19 0h1v1h-1zm56 0h1v1h-1zm29 0h1v1h-1zm3 0h1v1h-1zm20 0h1v1h-1zm4 0h1v1h-1zm-167 1h1v1h-1zm22 0h1v1h-1zm29 0h1v1h-1zm80 0h1v1h-1zm26 0h1v1h-1zm-224 1h1v1h-1zm7 0h1v1h-1zm96 0h1v1h-1zm2 0h1v1h-1zm1 0h1v1h-1zm42 0h1v1h-1zm-177 1h1v1h-1zm115 0h1v1h-1zm10 0h1v1h-1zm-110 1h1v1h-1zm1 0h1v1h-1zm11 0h1v1h-1zm85 0h1v1h-1zm98 0h1v1h-1zm26 0h1v1h-1zm-227 1h1v1h-1zm170 0h1v1h-1zm10 0h1v1h-1zm26 0h1v1h-1zm-182 1h1v1h-1zm42 0h1v1h-1zm4 0h1v1h-1zm53 0h1v1h-1zm12 0h1v1h-1zm3 0h1v1h-1zm3 0h1v1h-1zm16 0h1v1h-1zm13 0h1v1h-1zm-98 1h1v1h-1zm103 0h1v1h-1zm31 0h1v1h-1zm2 0h1v1h-1zm5 0h1v1h-1zm-175 1h1v1h-1zm2 0h1v1h-1zm28 0h1v1h-1zm5 0h1v1h-1zm79 0h1v1h-1zm41 0h1v1h-1zm29 0h1v1h-1zm14 0h1v1h-1zm1 0h1v1h-1zm-220 1h1v1h-1zm48 0h1v1h-1zm-2 1h1v1h-1zm29 0h1v1h-1zm24 0h1v1h-1zm1 0h1v1h-1zm13 0h1v1h-1zm15 0h1v1h-1zm2 0h1v1h-1zm70 0h1v1h-1zm11 0h1v1h-1zm-215 1h1v1h-1zm63 0h1v1h-1zm14 0h1v1h-1zm8 0h1v1h-1zm51 0h1v1h-1zm18 0h1v1h-1zm-146 1h1v1h-1zm59 0h1v1h-1zm25 0h1v1h-1zm-36 1h1v1h-1zm20 0h1v1h-1zm3 0h1v1h-1zm33 0h1v1h-1zm6 0h1v1h-1zm-66 1h1v1h-1zm12 0h1v1h-1zm68 0h1v1h-1zm26 0h1v1h-1zm11 0h1v1h-1zm-71 1h1v1h-1zm104 0h1v1h-1zm-122 1h1v1h-1zm98 0h1v1h-1zm52 0h1v1h-1zm-236 1h1v1h-1zm3 0h1v1h-1zm21 0h1v1h-1zm110 0h1v1h-1zm24 0h1v1h-1zm49 0h1v1h-1zm16 0h1v1h-1zm-135 1h1v1h-1zm10 0h1v1h-1zm-33 1h1v1h-1zm5 0h1v1h-1zm23 0h1v1h-1zm108 0h1v1h-1zm-152 2h1v1h-1zm45 0h1v1h-1zm49 0h1v1h-1zm-117 1h1v1h-1zm46 0h1v1h-1zm7 0h1v1h-1zm12 0h1v1h-1zm8 0h1v1h-1zm37 0h1v1h-1zm93 0h1v1h-1zm-116 1h1v1h-1zm83 0h1v1h-1zm22 0h1v1h-1zm-226 1h1v1h-1zm93 0h1v1h-1zm36 0h1v1h-1zm16 0h1v1h-1zm21 0h1v1h-1zm17 0h1v1h-1zm37 0h1v1h-1zm20 0h1v1h-1zm-228 1h1v1h-1zm40 0h1v1h-1zm42 0h1v1h-1zm11 0h1v1h-1zm17 0h1v1h-1zm61 0h1v1h-1zm60 0h1v1h-1zm-180 1h1v1h-1zm76 0h1v1h-1zm22 0h1v1h-1zm54 0h1v1h-1zm-173 1h1v1h-1zm8 0h1v1h-1zm50 0h1v1h-1zm10 0h1v1h-1zm43 0h1v1h-1zm35 0h1v1h-1zm43 0h1v1h-1zm5 0h1v1h-1zm-184 1h1v1h-1zm64 0h1v1h-1zm107 0h1v1h-1zm18 0h1v1h-1zm-228 1h1v1h-1zm58 0h1v1h-1zm45 0h1v1h-1zm-22 1h1v1h-1zm29 0h1v1h-1zm111 0h1v1h-1zm1 1h1v1h-1zm-170 1h1v1h-1zm17 0h1v1h-1zm2 0h1v1h-1zm37 0h1v1h-1zm64 0h1v1h-1zm56 0h1v1h-1zm-182 1h1v1h-1zm45 0h1v1h-1zm4 0h1v1h-1zm22 0h1v1h-1zm44 0h1v1h-1zm36 0h1v1h-1zm-200 1h1v1h-1zm84 0h1v1h-1zm39 0h1v1h-1zm20 0h1v1h-1zm10 0h1v1h-1zm74 0h1v1h-1zm-181 1h1v1h-1zm16 0h1v1h-1zm19 0h1v1h-1zm4 0h1v1h-1zm61 0h1v1h-1zm16 0h1v1h-1zm12 0h1v1h-1zm27 0h1v1h-1zm-144 1h1v1h-1zm37 0h1v1h-1zm5 0h1v1h-1zm-80 1h1v1h-1zm36 0h1v1h-1zm35 0h1v1h-1zm62 0h1v1h-1zm32 1h1v1h-1zm29 0h1v1h-1zm-114 1h1v1h-1zm15 0h1v1h-1zm-49 1h1v1h-1zm14 0h1v1h-1zm5 0h1v1h-1zm107 0h1v1h-1zm27 0h1v1h-1zm-172 1h1v1h-1zm64 0h1v1h-1zm73 0h1v1h-1zm12 0h1v1h-1zm3 0h1v1h-1zm-131 1h1v1h-1zm9 0h1v1h-1zm42 0h1v1h-1zm43 0h1v1h-1zm45 0h1v1h-1zm24 0h1v1h-1zm-68 1h1v1h-1zm14 0h1v1h-1zm-106 1h1v1h-1zm57 0h1v1h-1zm-1 1h1v1h-1zm56 0h1v1h-1zm16 0h1v1h-1zm-46 1h1v1h-1zm4 1h1v1h-1zm20 0h1v1h-1zm32 0h1v1h-1zm7 0h1v1h-1zm-91 1h1v1h-1zm13 0h1v1h-1zm1 0h1v1h-1zm40 0h1v1h-1zm-25 1h1v1h-1zm33 0h1v1h-1zm14 0h1v1h-1zm-93 1h1v1h-1zm94 0h1v1h-1zm15 0h1v1h-1zm-144 1h1v1h-1zm25 0h1v1h-1zm54 0h1v1h-1zm15 0h1v1h-1zm34 0h1v1h-1zm-46 1h1v1h-1zm27 0h1v1h-1zm5 0h1v1h-1zm25 0h1v1h-1zm-128 1h1v1h-1zm18 0h1v1h-1zm61 0h1v1h-1zm7 0h1v1h-1zm-115 1h1v1h-1zm24 0h1v1h-1zm16 0h1v1h-1zm59 0h1v1h-1zm67 0h1v1h-1zm-117 1h1v1h-1zm24 0h1v1h-1zm15 0h1v1h-1zm26 0h1v1h-1zm28 0h1v1h-1zm16 0h1v1h-1zm-93 1h1v1h-1zm-20 1h1v1h-1zm3 0h1v1h-1zm1 0h1v1h-1zm50 0h1v1h-1zm-78 1h1v1h-1zm10 0h1v1h-1zm12 0h1v1h-1zm4 0h1v1h-1zm20 0h1v1h-1zm3 0h1v1h-1zm78 0h1v1h-1zm-91 1h1v1h-1zm10 0h1v1h-1zm33 0h1v1h-1zm21 0h1v1h-1zm33 0h1v1h-1zm-96 1h1v1h-1zm21 0h1v1h-1zm70 0h1v1h-1zm19 0h1v1h-1zm-98 1h1v1h-1zm9 0h1v1h-1zm5 0h1v1h-1zm2 0h1v1h-1zm60 0h1v1h-1zm-87 2h1v1h-1zm78 1h1v1h-1zm7 0h1v1h-1zm-66 1h1v1h-1zm31 1h1v1h-1zm11 1h1v1h-1zm8 0h1v1h-1zm12 0h1v1h-1zm14 0h1v1h-1zm-39 1h1v1h-1zm-75 1h1v1h-1zm125 0h1v1h-1zm-82 1h1v1h-1zm46 0h1v1h-1zm8 0h1v1h-1zm5 1h1v1h-1zm-7 2h1v1h-1zm9 0h1v1h-1zm-50 1h1v1h-1zm11 0h1v1h-1zm-9 1h1v1h-1zm40 0h1v1h-1zm-8 1h1v1h-1zm18 0h1v1h-1zm22 2h1v1h-1zm-37 1h1v1h-1zm13 0h1v1h-1zm13 2h1v1h-1zm-39 2h1v1h-1zm-25 5h1v1h-1zm10 1h1v1h-1z" fill="#7e7e7e"/><path d="m420 92h1v1h-1zm201 0h1v1h-1zm-239 1h1v1h-1zm133 1h1v1h-1zm19 0h1v1h-1zm-146 1h1v1h-1zm64 0h1v1h-1zm11 0h1v1h-1zm108 0h1v1h-1zm39 0h1v1h-1zm-178 1h1v1h-1zm-42 1h1v1h-1zm149 0h1v1h-1zm80 1h1v1h-1zm-176 1h1v1h-1zm-38 2h1v1h-1zm165 0h1v1h-1zm-132 2h1v1h-1zm99 1h1v1h-1zm9 0h1v1h-1zm-13 1h1v1h-1zm48 0h1v1h-1zm35 0h1v1h-1zm-131 1h1v1h-1zm99 0h1v1h-1zm-10 1h1v1h-1zm-129 1h1v1h-1zm147 0h1v1h-1zm-178 1h1v1h-1zm106 0h1v1h-1zm26 1h1v1h-1zm-187 1h1v1h-1zm12 0h1v1h-1zm30 0h1v1h-1zm-20 1h1v1h-1zm96 0h1v1h-1zm28 0h1v1h-1zm82 1h1v1h-1zm34 0h1v1h-1zm-180 2h1v1h-1zm33 0h1v1h-1zm-20 2h1v1h-1zm158 0h1v1h-1zm-255 1h1v1h-1zm251 0h1v1h-1zm9 0h1v1h-1zm-221 1h1v1h-1zm-42 1h1v1h-1zm7 0h1v1h-1zm128 0h1v1h-1zm-98 2h1v1h-1zm145 0h1v1h-1zm-95 1h1v1h-1zm169 1h1v1h-1zm-103 1h1v1h-1zm18 0h1v1h-1zm-96 1h1v1h-1zm18 1h1v1h-1zm-92 1h1v1h-1zm11 0h1v1h-1zm74 0h1v1h-1zm141 3h1v1h-1zm-150 1h1v1h-1zm61 0h1v1h-1zm18 1h1v1h-1zm107 0h1v1h-1zm-70 2h1v1h-1zm26 0h1v1h-1zm-54 4h1v1h-1zm95 0h1v1h-1zm-178 1h1v1h-1zm50 3h1v1h-1zm-54 2h1v1h-1zm104 0h1v1h-1zm20 0h1v1h-1zm21 0h1v1h-1zm-221 1h1v1h-1zm22 0h1v1h-1zm139 0h1v1h-1zm23 0h1v1h-1zm-119 1h1v1h-1zm38 1h1v1h-1zm-80 2h1v1h-1zm198 0h1v1h-1zm-187 1h1v1h-1zm59 0h1v1h-1zm119 0h1v1h-1zm25 1h1v1h-1zm-253 1h1v1h-1zm167 0h1v1h-1zm-154 1h1v1h-1zm27 0h1v1h-1zm85 0h1v1h-1zm-105 1h1v1h-1zm103 0h1v1h-1zm93 0h1v1h-1zm-129 1h1v1h-1zm-53 1h1v1h-1zm184 0h1v1h-1zm-113 1h1v1h-1zm68 0h1v1h-1zm4 0h1v1h-1zm60 1h1v1h-1zm-202 2h1v1h-1zm30 0h1v1h-1zm-18 1h1v1h-1zm58 1h1v1h-1zm142 0h1v1h-1zm-230 1h1v1h-1zm200 0h1v1h-1zm-88 2h1v1h-1zm-80 2h1v1h-1zm-33 1h1v1h-1zm193 1h1v1h-1zm24 0h1v1h-1zm-211 1h1v1h-1zm10 0h1v1h-1zm134 0h1v1h-1zm12 0h1v1h-1zm30 0h1v1h-1zm-100 1h1v1h-1zm89 0h1v1h-1zm-124 1h1v1h-1zm24 0h1v1h-1zm20 1h1v1h-1zm78 1h1v1h-1zm48 0h1v1h-1zm-127 1h1v1h-1zm12 1h1v1h-1zm-105 1h1v1h-1zm207 0h1v1h-1zm-235 1h1v1h-1zm264 0h1v1h-1zm-217 1h1v1h-1zm188 0h1v1h-1zm-171 1h1v1h-1zm30 0h1v1h-1zm20 2h1v1h-1zm-114 1h1v1h-1zm92 0h1v1h-1zm17 1h1v1h-1zm29 0h1v1h-1zm-80 1h1v1h-1zm-58 1h1v1h-1zm87 1h1v1h-1zm-68 1h1v1h-1zm-5 1h1v1h-1zm147 0h1v1h-1zm-43 1h1v1h-1zm104 0h1v1h-1zm-86 1h1v1h-1zm-92 1h1v1h-1zm224 0h1v1h-1zm3 0h1v1h-1zm-260 1h1v1h-1zm177 0h1v1h-1zm25 0h1v1h-1zm-11 1h1v1h-1zm34 1h1v1h-1zm18 0h1v1h-1zm-114 2h1v1h-1zm109 0h1v1h-1zm-67 1h1v1h-1zm11 0h1v1h-1zm52 0h1v1h-1zm-241 1h1v1h-1zm80 0h1v1h-1zm65 0h1v1h-1zm117 0h1v1h-1zm-195 1h1v1h-1zm68 0h1v1h-1zm-72 2h1v1h-1zm169 0h1v1h-1zm-174 1h1v1h-1zm67 0h1v1h-1zm118 0h1v1h-1zm22 1h1v1h-1zm-114 2h1v1h-1zm-154 2h1v1h-1zm165 0h1v1h-1zm-102 1h1v1h-1zm63 0h1v1h-1zm59 0h1v1h-1zm-125 1h1v1h-1zm95 0h1v1h-1zm-119 1h1v1h-1zm97 0h1v1h-1zm71 1h1v1h-1zm-70 1h1v1h-1zm-90 1h1v1h-1zm76 0h1v1h-1zm58 0h1v1h-1zm-138 1h1v1h-1zm32 0h1v1h-1zm57 0h1v1h-1zm-136 1h1v1h-1zm4 0h1v1h-1zm160 0h1v1h-1zm54 1h1v1h-1zm-193 2h1v1h-1zm109 0h1v1h-1zm-88 1h1v1h-1zm109 1h1v1h-1zm81 1h1v1h-1zm-136 3h1v1h-1zm-84 3h1v1h-1zm105 2h1v1h-1zm105 0h1v1h-1zm-213 1h1v1h-1zm69 0h1v1h-1zm-57 1h1v1h-1zm145 0h1v1h-1zm-101 1h1v1h-1zm-55 1h1v1h-1zm5 0h1v1h-1zm213 0h1v1h-1zm-245 1h1v1h-1zm242 0h1v1h-1zm-201 1h1v1h-1zm129 1h1v1h-1zm-20 3h1v1h-1zm56 1h1v1h-1zm-181 2h1v1h-1zm14 0h1v1h-1zm58 1h1v1h-1zm-78 1h1v1h-1zm255 1h1v1h-1zm2 0h1v1h-1zm-127 1h1v1h-1zm-119 2h1v1h-1zm75 1h1v1h-1zm-98 3h1v1h-1zm-13 1h1v1h-1zm9 0h1v1h-1zm30 0h1v1h-1zm-1 1h1v1h-1zm112 0h1v1h-1zm-47 1h1v1h-1zm148 0h1v1h-1zm-110 1h1v1h-1zm2 0h1v1h-1zm49 0h1v1h-1zm-148 1h1v1h-1zm56 0h1v1h-1zm161 0h1v1h-1zm-240 1h1v1h-1zm45 0h1v1h-1zm1 0h1v1h-1zm178 0h1v1h-1zm-97 1h1v1h-1zm120 0h1v1h-1zm-229 1h1v1h-1zm57 1h1v1h-1zm41 0h1v1h-1zm-12 1h1v1h-1zm35 0h1v1h-1zm119 2h1v1h-1zm-37 1h1v1h-1zm-191 1h1v1h-1zm70 0h1v1h-1zm-89 1h1v1h-1zm158 0h1v1h-1zm37 0h1v1h-1zm-209 1h1v1h-1zm81 0h1v1h-1zm75 4h1v1h-1zm-53 1h1v1h-1zm130 1h1v1h-1zm-247 1h1v1h-1zm40 0h1v1h-1zm37 0h1v1h-1zm179 0h1v1h-1zm-228 2h1v1h-1zm91 0h1v1h-1zm-61 1h1v1h-1zm88 3h1v1h-1zm-10 1h1v1h-1zm12 0h1v1h-1zm-60 2h1v1h-1zm93 0h1v1h-1zm6 1h1v1h-1zm-179 1h1v1h-1zm107 0h1v1h-1zm90 1h1v1h-1zm-135 1h1v1h-1zm4 0h1v1h-1zm76 0h1v1h-1zm110 0h1v1h-1zm13 1h1v1h-1zm-193 2h1v1h-1zm45 0h1v1h-1zm73 0h1v1h-1zm-116 1h1v1h-1zm15 0h1v1h-1zm-8 1h1v1h-1zm91 0h1v1h-1zm-41 1h1v1h-1zm-110 2h1v1h-1zm-2 2h1v1h-1zm112 0h1v1h-1zm76 0h1v1h-1zm-99 1h1v1h-1zm74 0h1v1h-1zm-196 1h1v1h-1zm-1 1h1v1h-1zm21 0h1v1h-1zm108 0h1v1h-1zm39 1h1v1h-1zm-120 1h1v1h-1zm183 0h1v1h-1zm-242 1h1v1h-1zm29 0h1v1h-1zm-13 5h1v1h-1zm10 0h1v1h-1zm35 2h1v1h-1zm141 0h1v1h-1zm-102 1h1v1h-1zm-5 1h1v1h-1zm62 0h1v1h-1zm-20 1h1v1h-1zm-144 1h1v1h-1zm165 0h1v1h-1zm16 0h1v1h-1zm-28 1h1v1h-1zm30 1h1v1h-1zm-53 2h1v1h-1zm-69 1h1v1h-1zm61 0h1v1h-1zm134 0h1v1h-1zm-97 2h1v1h-1zm-146 1h1v1h-1zm160 1h1v1h-1zm-135 1h1v1h-1zm180 1h1v1h-1zm-205 1h1v1h-1zm39 0h1v1h-1zm138 0h1v1h-1zm14 0h1v1h-1zm65 0h1v1h-1zm-255 1h1v1h-1zm233 0h1v1h-1zm-203 1h1v1h-1zm39 0h1v1h-1zm18 0h1v1h-1zm160 0h1v1h-1zm-183 1h1v1h-1zm11 0h1v1h-1zm124 0h1v1h-1zm-115 1h1v1h-1zm13 3h1v1h-1zm25 1h1v1h-1zm20 0h1v1h-1zm114 1h1v1h-1zm-121 1h1v1h-1zm118 0h1v1h-1zm-31 1h1v1h-1zm-116 2h1v1h-1zm108 0h1v1h-1zm-174 1h1v1h-1zm22 1h1v1h-1zm59 0h1v1h-1zm-100 1h1v1h-1zm177 0h1v1h-1zm-199 1h1v1h-1zm229 1h1v1h-1zm-128 1h1v1h-1zm55 0h1v1h-1zm-2 1h1v1h-1zm52 0h1v1h-1zm-22 1h1v1h-1zm29 1h1v1h-1zm-150 1h1v1h-1zm-35 1h1v1h-1zm50 0h1v1h-1zm66 0h1v1h-1zm-37 1h1v1h-1zm-99 1h1v1h-1zm72 0h1v1h-1zm54 0h1v1h-1zm-113 1h1v1h-1zm-23 1h1v1h-1zm10 0h1v1h-1zm134 0h1v1h-1zm88 0h1v1h-1zm-235 1h1v1h-1zm5 0h1v1h-1zm174 1h1v1h-1zm46 0h1v1h-1zm-129 1h1v1h-1zm108 1h1v1h-1zm-150 2h1v1h-1zm101 0h1v1h-1zm53 0h1v1h-1zm-209 1h1v1h-1zm-2 1h1v1h-1zm103 0h1v1h-1zm61 0h1v1h-1zm33 0h1v1h-1zm-60 1h1v1h-1zm101 0h1v1h-1zm-86 1h1v1h-1zm69 0h1v1h-1zm-128 1h1v1h-1zm52 0h1v1h-1zm31 0h1v1h-1zm-174 1h1v1h-1zm231 0h1v1h-1zm-126 1h1v1h-1zm88 0h1v1h-1zm-72 1h1v1h-1zm-70 3h1v1h-1zm203 0h1v1h-1zm-137 1h1v1h-1zm39 0h1v1h-1zm19 1h1v1h-1zm-97 1h1v1h-1zm24 0h1v1h-1zm49 1h1v1h-1zm48 0h1v1h-1zm-19 1h1v1h-1zm-170 2h1v1h-1zm38 0h1v1h-1zm21 1h1v1h-1zm32 0h1v1h-1zm112 0h1v1h-1zm-2 4h1v1h-1zm-191 2h1v1h-1zm106 0h1v1h-1zm-75 2h1v1h-1zm163 1h1v1h-1zm-88 2h1v1h-1zm117 0h1v1h-1zm-239 1h1v1h-1zm172 1h1v1h-1zm12 0h1v1h-1zm-176 1h1v1h-1zm77 0h1v1h-1zm99 2h1v1h-1zm-167 1h1v1h-1zm-8 1h1v1h-1zm-22 1h1v1h-1zm86 0h1v1h-1zm148 0h1v1h-1zm9 0h1v1h-1zm-105 2h1v1h-1zm128 0h1v1h-1zm-238 1h1v1h-1zm130 0h1v1h-1zm58 0h1v1h-1zm-213 2h1v1h-1zm11 1h1v1h-1zm3 0h1v1h-1zm148 0h1v1h-1zm58 0h1v1h-1zm-146 1h1v1h-1zm43 2h1v1h-1zm135 0h1v1h-1zm-84 1h1v1h-1zm68 0h1v1h-1zm-100 1h1v1h-1zm107 0h1v1h-1zm-184 1h1v1h-1zm19 0h1v1h-1zm28 0h1v1h-1zm-60 1h1v1h-1zm118 0h1v1h-1zm-97 1h1v1h-1zm66 0h1v1h-1zm39 0h1v1h-1zm25 0h1v1h-1zm-139 1h1v1h-1zm19 0h1v1h-1zm42 0h1v1h-1zm-68 2h1v1h-1zm-36 1h1v1h-1zm22 1h1v1h-1zm-31 2h1v1h-1zm62 0h1v1h-1zm132 1h1v1h-1zm-171 1h1v1h-1zm3 0h1v1h-1zm166 0h1v1h-1zm8 0h1v1h-1zm-180 2h1v1h-1zm176 0h1v1h-1zm-35 1h1v1h-1zm7 0h1v1h-1zm-109 1h1v1h-1zm64 0h1v1h-1zm39 0h1v1h-1zm58 0h1v1h-1zm-159 2h1v1h-1zm15 1h1v1h-1zm82 0h1v1h-1zm-158 1h1v1h-1zm54 0h1v1h-1zm2 1h1v1h-1zm19 0h1v1h-1zm91 0h1v1h-1zm2 0h1v1h-1zm-171 1h1v1h-1zm-14 1h1v1h-1zm56 0h1v1h-1zm37 1h1v1h-1zm-96 2h1v1h-1zm-9 1h1v1h-1zm104 0h1v1h-1zm30 0h1v1h-1zm-1 1h1v1h-1zm55 1h1v1h-1zm-128 2h1v1h-1zm54 0h1v1h-1zm-101 1h1v1h-1zm8 0h1v1h-1zm247 1h1v1h-1zm4 2h1v1h-1zm-217 1h1v1h-1zm121 1h1v1h-1zm-2 1h1v1h-1zm6 1h1v1h-1zm-143 1h1v1h-1zm195 0h1v1h-1zm-155 2h1v1h-1zm3 1h1v1h-1zm129 1h1v1h-1zm-110 1h1v1h-1zm117 0h1v1h-1zm-119 1h1v1h-1zm119 0h1v1h-1zm-218 1h1v1h-1zm146 0h1v1h-1zm60 0h1v1h-1zm-190 1h1v1h-1zm65 1h1v1h-1zm86 0h1v1h-1zm56 0h1v1h-1zm-140 1h1v1h-1zm-67 1h1v1h-1zm63 0h1v1h-1zm94 0h1v1h-1zm43 0h1v1h-1zm-185 1h1v1h-1zm-46 2h1v1h-1zm25 1h1v1h-1zm100 0h1v1h-1zm5 0h1v1h-1zm85 0h1v1h-1zm54 0h1v1h-1zm-26 1h1v1h-1zm-20 1h1v1h-1zm-75 2h1v1h-1zm-18 1h1v1h-1zm141 0h1v1h-1zm-113 1h1v1h-1zm-66 2h1v1h-1zm176 0h1v1h-1zm-156 1h1v1h-1zm38 0h1v1h-1zm85 0h1v1h-1zm-184 1h1v1h-1zm52 0h1v1h-1zm7 0h1v1h-1zm52 0h1v1h-1zm-97 1h1v1h-1zm29 0h1v1h-1zm53 0h1v1h-1zm-102 1h1v1h-1zm89 0h1v1h-1zm126 0h1v1h-1zm-83 1h1v1h-1zm-75 2h1v1h-1zm4 0h1v1h-1zm1 0h1v1h-1zm7 0h1v1h-1zm37 0h1v1h-1zm1 0h1v1h-1zm-135 1h1v1h-1zm81 0h1v1h-1zm92 0h1v1h-1zm26 0h1v1h-1zm68 0h1v1h-1zm-199 1h1v1h-1zm17 0h1v1h-1zm171 0h1v1h-1zm-257 1h1v1h-1zm38 0h1v1h-1zm48 0h1v1h-1zm14 0h1v1h-1zm31 0h1v1h-1zm13 0h1v1h-1zm41 1h1v1h-1zm-85 1h1v1h-1zm-104 1h1v1h-1zm100 0h1v1h-1zm33 0h1v1h-1zm-28 1h1v1h-1zm38 0h1v1h-1zm-130 1h1v1h-1zm70 0h1v1h-1zm112 0h1v1h-1zm-104 3h1v1h-1zm2 0h1v1h-1zm-22 1h1v1h-1zm72 0h1v1h-1zm-73 1h1v1h-1zm199 0h1v1h-1zm-172 1h1v1h-1zm37 0h1v1h-1zm1 0h1v1h-1zm-48 1h1v1h-1zm45 0h1v1h-1zm-33 1h1v1h-1zm49 0h1v1h-1zm61 0h1v1h-1zm16 0h1v1h-1zm-139 1h1v1h-1zm20 0h1v1h-1zm-61 1h1v1h-1zm16 0h1v1h-1zm-56 1h1v1h-1zm60 0h1v1h-1zm24 0h1v1h-1zm5 0h1v1h-1zm10 0h1v1h-1zm80 0h1v1h-1zm23 0h1v1h-1zm-109 2h1v1h-1zm40 0h1v1h-1zm64 0h1v1h-1zm11 0h1v1h-1zm1 0h1v1h-1zm-3 2h1v1h-1zm-130 1h1v1h-1zm81 0h1v1h-1zm1 0h1v1h-1zm21 0h1v1h-1zm-108 1h1v1h-1zm159 0h1v1h-1zm-234 1h1v1h-1zm201 0h1v1h-1zm-2 1h1v1h-1zm16 0h1v1h-1zm-223 1h1v1h-1zm39 0h1v1h-1zm68 0h1v1h-1zm134 0h1v1h-1zm12 0h1v1h-1zm-150 1h1v1h-1zm102 0h1v1h-1zm-98 1h1v1h-1zm119 0h1v1h-1zm-121 1h1v1h-1zm21 0h1v1h-1zm41 0h1v1h-1zm43 0h1v1h-1zm20 0h1v1h-1zm39 1h1v1h-1zm-125 1h1v1h-1zm88 0h1v1h-1zm-144 1h1v1h-1zm-11 1h1v1h-1zm117 0h1v1h-1zm16 0h1v1h-1zm42 0h1v1h-1zm-123 1h1v1h-1zm76 1h1v1h-1zm53 0h1v1h-1zm-167 1h1v1h-1zm107 0h1v1h-1zm-137 1h1v1h-1zm111 0h1v1h-1zm11 0h1v1h-1zm22 0h1v1h-1zm-94 1h1v1h-1zm22 0h1v1h-1zm80 0h1v1h-1zm-47 1h1v1h-1zm-168 2h1v1h-1zm194 0h1v1h-1zm13 1h1v1h-1zm7 2h1v1h-1zm-72 1h1v1h-1zm-4 1h1v1h-1zm-69 1h1v1h-1zm14 0h1v1h-1zm-11 1h1v1h-1zm64 0h1v1h-1zm-57 1h1v1h-1zm169 0h1v1h-1zm-109 1h1v1h-1zm49 0h1v1h-1zm-165 1h1v1h-1zm-24 1h1v1h-1zm7 0h1v1h-1zm44 2h1v1h-1zm2 0h1v1h-1zm173 0h1v1h-1zm-212 1h1v1h-1zm19 0h1v1h-1zm28 3h1v1h-1zm-15 1h1v1h-1zm66 0h1v1h-1zm-104 3h1v1h-1zm171 0h1v1h-1zm-93 1h1v1h-1zm74 0h1v1h-1zm8 1h1v1h-1zm-182 4h1v1h-1zm50 2h1v1h-1zm131 0h1v1h-1zm32 0h1v1h-1zm-140 1h1v1h-1zm8 1h1v1h-1zm35 1h1v1h-1zm-94 3h1v1h-1zm3 0h1v1h-1zm13 0h1v1h-1zm172 0h1v1h-1zm-110 1h1v1h-1zm46 0h1v1h-1zm62 0h1v1h-1zm-33 1h1v1h-1zm24 0h1v1h-1zm-193 1h1v1h-1zm208 0h1v1h-1zm14 0h1v1h-1zm-197 1h1v1h-1zm21 0h1v1h-1zm170 3h1v1h-1zm39 0h1v1h-1zm9 0h1v1h-1zm-243 2h1v1h-1zm66 2h1v1h-1zm62 0h1v1h-1zm82 1h1v1h-1zm-192 1h1v1h-1zm21 1h1v1h-1zm26 0h1v1h-1zm170 0h1v1h-1zm-257 5h1v1h-1zm48 0h1v1h-1zm187 0h1v1h-1zm-224 2h1v1h-1zm149 2h1v1h-1zm-116 1h1v1h-1zm-50 1h1v1h-1zm116 0h1v1h-1zm104 0h1v1h-1zm-78 2h1v1h-1zm26 0h1v1h-1zm83 0h1v1h-1zm-243 1h1v1h-1zm96 0h1v1h-1zm66 1h1v1h-1zm-62 1h1v1h-1zm-112 1h1v1h-1zm75 0h1v1h-1zm16 0h1v1h-1zm176 0h1v1h-1zm-194 2h1v1h-1zm103 0h1v1h-1zm57 0h1v1h-1zm-198 2h1v1h-1zm169 0h1v1h-1zm-66 4h1v1h-1zm14 1h1v1h-1zm-103 1h1v1h-1zm24 1h1v1h-1zm84 0h1v1h-1zm21 0h1v1h-1zm78 0h1v1h-1zm-235 1h1v1h-1zm56 0h1v1h-1zm-19 1h1v1h-1zm-26 1h1v1h-1zm195 0h1v1h-1zm-70 1h1v1h-1zm38 0h1v1h-1zm-182 1h1v1h-1zm27 0h1v1h-1zm20 0h1v1h-1zm21 0h1v1h-1zm158 0h1v1h-1zm-199 1h1v1h-1zm113 0h1v1h-1zm-138 1h1v1h-1zm117 0h1v1h-1zm80 0h1v1h-1zm-27 1h1v1h-1zm-185 1h1v1h-1zm196 0h1v1h-1zm-25 1h1v1h-1zm-174 1h1v1h-1zm175 2h1v1h-1zm-75 2h1v1h-1zm-17 1h1v1h-1zm181 0h1v1h-1zm-190 1h1v1h-1zm130 0h1v1h-1zm-60 1h1v1h-1zm-61 1h1v1h-1zm136 0h1v1h-1zm12 0h1v1h-1zm-187 2h1v1h-1zm10 0h1v1h-1zm200 0h1v1h-1zm-33 1h1v1h-1zm5 0h1v1h-1zm-147 1h1v1h-1zm112 0h1v1h-1zm-114 1h1v1h-1zm105 1h1v1h-1zm-106 1h1v1h-1zm25 0h1v1h-1zm163 0h1v1h-1zm-264 1h1v1h-1zm56 1h1v1h-1zm5 0h1v1h-1zm186 0h1v1h-1zm-107 1h1v1h-1zm-138 1h1v1h-1zm166 2h1v1h-1zm-65 1h1v1h-1zm-44 1h1v1h-1zm176 0h1v1h-1zm-118 2h1v1h-1zm-60 1h1v1h-1zm154 1h1v1h-1zm-173 1h1v1h-1zm94 0h1v1h-1zm-72 2h1v1h-1zm145 0h1v1h-1zm-22 1h1v1h-1zm40 0h1v1h-1zm-213 1h1v1h-1zm59 1h1v1h-1zm30 1h1v1h-1zm15 4h1v1h-1zm112 0h1v1h-1zm11 1h1v1h-1zm-180 1h1v1h-1zm97 0h1v1h-1zm29 0h1v1h-1zm28 0h1v1h-1zm-7 1h1v1h-1zm21 0h1v1h-1zm-130 1h1v1h-1zm-49 1h1v1h-1zm100 0h1v1h-1zm102 0h1v1h-1zm-92 1h1v1h-1zm-27 1h1v1h-1zm117 1h1v1h-1zm-160 1h1v1h-1zm156 0h1v1h-1zm-152 2h1v1h-1zm7 0h1v1h-1zm62 0h1v1h-1zm25 0h1v1h-1zm17 1h1v1h-1zm-66 2h1v1h-1zm-38 1h1v1h-1zm-14 1h1v1h-1zm-26 3h1v1h-1zm31 1h1v1h-1zm-51 3h1v1h-1zm151 0h1v1h-1zm-73 1h1v1h-1zm74 0h1v1h-1zm-109 1h1v1h-1zm70 0h1v1h-1zm100 0h1v1h-1zm-138 2h1v1h-1zm67 1h1v1h-1zm54 0h1v1h-1zm-6 2h1v1h-1zm4 0h1v1h-1zm-141 4h1v1h-1zm22 0h1v1h-1zm40 3h1v1h-1zm-41 4h1v1h-1zm46 0h1v1h-1zm-47 1h1v1h-1zm3 0h1v1h-1zm56 0h1v1h-1zm75 0h1v1h-1zm-33 1h1v1h-1zm-2 1h1v1h-1zm9 0h1v1h-1zm-53 1h1v1h-1zm47 0h1v1h-1zm-97 1h1v1h-1zm8 1h1v1h-1zm50 0h1v1h-1zm-50 3h1v1h-1zm42 4h1v1h-1zm28 1h1v1h-1zm27 2h1v1h-1zm22 0h1v1h-1z" fill="#8a8a8a"/>
<ellipse cx="405" cy="207" rx="3.6" ry="2.5" fill="#00ff00" transform="rotate(-30 405 207)"/>
<ellipse cx="355.5" cy="488" rx="4.8" ry="4.8" fill="#00ff00"/>
<ellipse cx="404" cy="487" rx="4.6" ry="4.4" fill="#00ff00"/>
<ellipse cx="470" cy="516" rx="4.5" ry="4" fill="#00ff00"/>
<ellipse cx="386" cy="596" rx="4.5" ry="4" fill="#00ff00"/>
<ellipse cx="349.5" cy="700.5" rx="3.6" ry="4.6" fill="#00ff00"/>
</svg>
<div class="a" style="left:57px;top:762px;width:756px;height:48px;background:#fff"></div>
<div class="a" style="left:57px;top:766px;width:756px;height:20px;border:1px solid #1e1e1e;background:linear-gradient(90deg,#0b0b0b 0%,#ececec 100%)"></div>
<div class="tk" style="left:132.0px"></div>
<div id="t_cb0" class="tl" style="left:97.64px;top:796px;transform:scaleX(1.1355);transform-origin:0 0;">0.038</div>
<div class="tk" style="left:207.7px"></div>
<div id="t_cb1" class="tl" style="left:172.29px;top:796px;transform:scaleX(1.1652);transform-origin:0 0;">0.11</div>
<div class="tk" style="left:283.3px"></div>
<div id="t_cb2" class="tl" style="left:249.28px;top:796px;transform:scaleX(1.1167);transform-origin:0 0;">0.26</div>
<div class="tk" style="left:359.0px"></div>
<div id="t_cb3" class="tl" style="left:326.03px;top:796px;transform:scaleX(1.0840);transform-origin:0 0;">0.56</div>
<div class="tk" style="left:434.6px"></div>
<div id="t_cb4" class="tl" style="left:401.25px;top:796px;transform:scaleX(1.1118);transform-origin:0 0;">1.2</div>
<div class="tk" style="left:510.2px"></div>
<div id="t_cb5" class="tl" style="left:476.34px;top:796px;transform:scaleX(1.1111);transform-origin:0 0;">2.4</div>
<div class="tk" style="left:585.9px"></div>
<div id="t_cb6" class="tl" style="left:551.48px;top:796px;transform:scaleX(1.1353);transform-origin:0 0;">4.7</div>
<div class="tk" style="left:661.6px"></div>
<div id="t_cb7" class="tl" style="left:625.06px;top:796px;transform:scaleX(1.1706);transform-origin:0 0;">9.5</div>
<div class="tk" style="left:737.2px"></div>
<div id="t_cb8" class="tl" style="left:704.67px;top:796px;transform:scaleX(1.0786);transform-origin:0 0;">19</div>
<div class="b" style="left:1px;top:94px;width:55px;height:28px"><svg width="55" height="28" viewBox="1 94 55 28"><rect x="18" y="98" width="7" height="3.5" fill="#ff0000"/><path d="M18.5,101.5 V112 L21.5,115.5 L24.5,112 V101.5 Z" fill="#ffe000" stroke="#222" stroke-width="1"/><path d="M21.5,102 V111.5 M18.5,111.5 H24.5" stroke="#333" stroke-width="1.1"/><path d="M19.2,112.2 L23.8,112.2 L21.5,115 Z" fill="#f8dcc0"/><path d="M20.3,114 L22.7,114 L21.5,116.2 Z" fill="#000"/><polygon points="43,104 51,104 47,112" fill="#3c3c3c"/></svg></div>
<div class="b" style="left:1px;top:126px;width:55px;height:28px"><svg width="55" height="28" viewBox="1 126 55 28"><circle cx="21" cy="139.7" r="7.8" fill="#a0a0a0" stroke="#222" stroke-width="1.3"/><polygon points="43,136 51,136 47,144" fill="#3c3c3c"/></svg></div>
<div class="b" style="left:1px;top:156px;width:55px;height:28px"><svg width="55" height="28" viewBox="1 156 55 28"><circle cx="27.8" cy="169.6" r="8.7" fill="#a9a9a9" stroke="#333" stroke-width="1.6"/><circle cx="27.8" cy="164.3" r="1.6" fill="#222"/><path d="M25,167.9 H29 V175.2" stroke="#222" stroke-width="2.2" fill="none"/><path d="M24.8,175.6 H31.2" stroke="#222" stroke-width="1.4"/></svg></div>
<div class="b" style="left:1px;top:183px;width:55px;height:29px"><svg width="55" height="29" viewBox="1 183 55 29"><circle cx="27.8" cy="198" r="9.3" fill="#b2b2b2"/><path d="M23,190.5 H37 M23,194.5 H37 M23,198.5 H37 M23,202.5 H37 M23,206.5 H37" stroke="#1e1e1e" stroke-width="1"/><path d="M19.5,190 h1.3 v1.3 h-1.3 Z M19.5,194 h1.3 v1.3 h-1.3 Z M19.5,198 h1.3 v1.3 h-1.3 Z M19.5,202 h1.3 v1.3 h-1.3 Z M19.5,206 h1.3 v1.3 h-1.3 Z" fill="#000"/></svg></div>
<div class="b" style="left:1px;top:211px;width:55px;height:29px"><svg width="55" height="29" viewBox="1 211 55 29"><ellipse cx="33.5" cy="220" rx="4.2" ry="4.7" fill="#7c7c7c" stroke="#333" stroke-width="0.8"/><path d="M18.5,235.5 V224.5 H21 M24,224.5 V226.5 H30 V228" stroke="#222" stroke-width="1.2" fill="none"/><path d="M21.5,228.5 H37.5 L31.5,235.5 H18.5 Z" stroke="#222" stroke-width="1.2" fill="none" stroke-linejoin="round"/><path d="M22.5,225 V216.5" stroke="#222" stroke-width="1.2"/><path d="M20.5,218.5 L22.5,215.5 L24.5,218.5 Z" fill="#222"/></svg></div>
<div class="b" style="left:1px;top:239px;width:55px;height:29px"><svg width="55" height="29" viewBox="1 239 55 29"><ellipse cx="33.5" cy="248" rx="4.2" ry="4.7" fill="#7c7c7c" stroke="#333" stroke-width="0.8"/><path d="M18.5,263.5 V252.5 H21 M24,252.5 V254.5 H30 V256" stroke="#222" stroke-width="1.2" fill="none"/><path d="M21.5,256.5 H37.5 L31.5,263.5 H18.5 Z" stroke="#222" stroke-width="1.2" fill="none" stroke-linejoin="round"/><path d="M22.5,243.5 V251" stroke="#222" stroke-width="1.2"/><path d="M20.5,249 L22.5,252 L24.5,249 Z" fill="#222"/></svg></div>
<div class="b" style="left:1px;top:267px;width:55px;height:29px"><svg width="55" height="29" viewBox="1 267 55 29"><rect x="10" y="277.5" width="10" height="9.5" fill="#00ff00"/><polygon points="43,278 51,278 47,286" fill="#3c3c3c"/></svg></div>
<div class="b" style="left:1px;top:295px;width:55px;height:29px"><svg width="55" height="29" viewBox="1 295 55 29"><path d="M12,309.5 H30" stroke="#111" stroke-width="1.8"/><polygon points="43,305 51,305 47,313" fill="#3c3c3c"/></svg></div>
<div class="b" style="left:1px;top:323px;width:55px;height:29px"><svg width="55" height="29" viewBox="1 323 55 29"><text x="28.2" y="334" font-family="Liberation Mono" font-size="10.2" fill="#2e2e2e" stroke="#2e2e2e" stroke-width="0.25" text-anchor="middle">src</text><path d="M19,336.5 H38" stroke="#222" stroke-width="1.1"/><text x="28.2" y="345.6" font-family="Liberation Mono" font-size="10.2" fill="#2e2e2e" stroke="#2e2e2e" stroke-width="0.25" text-anchor="middle">bkg</text></svg></div>
<div class="b" style="left:1px;top:351px;width:55px;height:29px"><svg width="55" height="29" viewBox="1 351 55 29"><text x="28.2" y="362.5" font-family="Liberation Mono" font-size="10.2" fill="#2e2e2e" stroke="#2e2e2e" stroke-width="0.25" text-anchor="middle">inc</text><path d="M19,365.5 H38" stroke="#222" stroke-width="1.1"/><text x="28.2" y="374.8" font-family="Liberation Mono" font-size="10.2" fill="#2e2e2e" stroke="#2e2e2e" stroke-width="0.25" text-anchor="middle">exc</text></svg></div>
<div class="b" style="left:1px;top:379px;width:55px;height:29px"><svg width="55" height="29" viewBox="1 379 55 29"><rect x="20.3" y="390.5" width="10" height="11" fill="#a0a0a0" stroke="#333" stroke-width="1.1"/><rect x="25.7" y="385" width="9.5" height="11" fill="#f0f0f0" stroke="#333" stroke-width="1.1"/></svg></div>
<div class="b" style="left:1px;top:407px;width:55px;height:29px"><svg width="55" height="29" viewBox="1 407 55 29"><rect x="25.7" y="413" width="9.5" height="11" fill="#f0f0f0" stroke="#333" stroke-width="1.1"/><rect x="20.3" y="418.5" width="10" height="11" fill="#a0a0a0" stroke="#333" stroke-width="1.1"/></svg></div>
<div class="b" style="left:1px;top:435px;width:55px;height:29px"><svg width="55" height="29" viewBox="1 435 55 29"><rect x="18.3" y="440" width="19.5" height="19.5" stroke="#111" stroke-width="1.3" fill="none"/><rect x="17.3" y="439" width="2" height="2" fill="#111"/><rect x="17.3" y="458.5" width="2" height="2" fill="#111"/><rect x="36.8" y="439" width="2" height="2" fill="#111"/><rect x="36.8" y="458.5" width="2" height="2" fill="#111"/><rect x="20.5" y="442.5" width="8" height="5.5" fill="#eee" stroke="#222" stroke-width="1.1"/><ellipse cx="31.5" cy="454.5" rx="3.8" ry="3" fill="#eee" stroke="#222" stroke-width="1.4"/></svg></div>
<div class="b" style="left:1px;top:463px;width:55px;height:29px"><svg width="55" height="29" viewBox="1 463 55 29"><rect x="18.3" y="468" width="19.5" height="19.5" stroke="#111" stroke-width="1.3" fill="none" stroke-dasharray="2,1.5"/><rect x="20.5" y="470.5" width="8" height="5.5" fill="#eee" stroke="#222" stroke-width="1.1"/><ellipse cx="31.5" cy="482.5" rx="3.8" ry="3" fill="#eee" stroke="#222" stroke-width="1.4"/></svg></div>
<div class="b" style="left:1px;top:491px;width:55px;height:29px"><svg width="55" height="29" viewBox="1 491 55 29"><path d="M19.5,507 H32 L37,512.5 L32,518 H19.5 Q17.5,518 17.5,516 V509 Q17.5,507 19.5,507 Z" stroke="#111" stroke-width="1.4" fill="none" transform="translate(0,-7)"/><circle cx="31" cy="505.5" r="1.6" stroke="#111" stroke-width="1.2" fill="none"/><path d="M35.5,495.5 V501 M32.7,498.3 H38.3" stroke="#111" stroke-width="1.2"/></svg></div>
<div class="a" style="left:813px;top:92px;width:1px;height:718px;background:#c2c2c2"></div>
<div class="a" style="left:818px;top:94px;width:131px;height:131px;border:1px solid #9c9c9c;background:#000;box-shadow:inset 0 0 0 1px #fff"></div>
<div class="a" style="left:851px;top:96px;width:65px;height:127px;background:#0a0a0a"></div>
<svg class="a" style="left:0;top:0" width="955" height="260" shape-rendering="crispEdges"><path d="M885 155h1v1h-1zM868 212h1v1h-1zM884 161h1v1h-1zM892 122h1v1h-1zM886 176h1v1h-1zM889 111h1v1h-1zM903 111h1v1h-1zM863 184h1v1h-1zM880 219h1v1h-1zM880 179h1v1h-1zM879 119h1v1h-1zM869 164h1v1h-1zM884 123h1v1h-1zM895 103h1v1h-1zM893 153h1v1h-1zM885 163h1v1h-1zM886 160h1v1h-1zM877 155h1v1h-1zM880 221h1v1h-1zM877 202h1v1h-1zM880 138h1v1h-1zM876 135h1v1h-1zM871 193h1v1h-1zM868 203h1v1h-1zM878 216h1v1h-1zM889 100h1v1h-1zM868 211h1v1h-1zM864 219h1v1h-1zM898 108h1v1h-1zM867 194h1v1h-1zM890 110h1v1h-1zM875 217h1v1h-1zM886 114h1v1h-1zM882 112h1v1h-1zM864 197h1v1h-1zM878 168h1v1h-1zM898 123h1v1h-1zM897 115h1v1h-1zM891 114h1v1h-1zM884 125h1v1h-1zM876 218h1v1h-1zM898 137h1v1h-1zM888 125h1v1h-1zM875 204h1v1h-1zM908 112h1v1h-1zM884 126h1v1h-1zM869 194h1v1h-1zM876 136h1v1h-1zM897 110h1v1h-1zM892 129h1v1h-1zM884 145h1v1h-1zM867 217h1v1h-1zM890 170h1v1h-1zM882 122h1v1h-1zM878 210h1v1h-1zM881 130h1v1h-1zM887 190h1v1h-1zM904 123h1v1h-1zM873 207h1v1h-1zM873 151h1v1h-1zM909 104h1v1h-1zM895 129h1v1h-1zM898 131h1v1h-1zM873 172h1v1h-1zM898 121h1v1h-1zM887 108h1v1h-1zM890 168h1v1h-1zM872 174h1v1h-1zM861 211h1v1h-1zM890 102h1v1h-1zM871 154h1v1h-1zM888 121h1v1h-1zM869 169h1v1h-1zM897 144h1v1h-1zM871 219h1v1h-1zM878 184h1v1h-1zM880 117h1v1h-1zM908 102h1v1h-1zM889 185h1v1h-1zM900 102h1v1h-1zM889 158h1v1h-1zM901 138h1v1h-1zM896 109h1v1h-1zM886 189h1v1h-1zM880 189h1v1h-1z" fill="#9a9a9a"/><path d="M834.5,223 V146.5 H923.5 V223" stroke="#00e5ee" stroke-width="1.2" fill="none"/><path d="M883.5,159.5 H913.5" stroke="#00e5ee" stroke-width="1.2"/><path d="M908,157 L913.5,159.5 L908,162 Z" fill="#00e5ee"/><path d="M883.5,140 V131" stroke="#00e5ee" stroke-width="1.2"/><path d="M881,136 L883.5,130.5 L886,136 Z" fill="#00e5ee"/><path d="M883.5,159.5 H863 M883.5,159.5 V141" stroke="#ffff00" stroke-width="1.2"/><path d="M868.5,157 L862.5,159.5 L868.5,162 Z" fill="#ffff00"/><path d="M881,146 L883.5,140.5 L886,146 Z" fill="#ffff00"/><text x="920" y="165" font-family="Liberation Sans" font-size="11" fill="#00e5ee">X</text><text x="879" y="124.5" font-family="Liberation Sans" font-size="11" fill="#00e5ee">Y</text><text x="848.5" y="165" font-family="Liberation Sans" font-size="11" fill="#ffff00">E</text><text x="878.5" y="134.5" font-family="Liberation Sans" font-size="11" fill="#ffff00">N</text></svg>
<div class="b" style="left:818px;top:226px;width:32px;height:28px"><svg width="32" height="28" viewBox="818 226 32 28"><text x="833" y="239.7" font-family="Liberation Sans" font-weight="bold" font-size="12" fill="#111">N</text><path d="M828,237 V245.5 H836" stroke="#111" stroke-width="1.3" fill="none"/><path d="M826,239 L828,235.5 L830,239 Z M834,243.5 L837.5,245.5 L834,247.5 Z" fill="#111"/></svg></div>
<div class="b" style="left:850px;top:226px;width:32px;height:28px"><svg width="32" height="28" viewBox="850 226 32 28"><path d="M861,229 H871 L866,240 Z M861,251 H871 L866,240 Z M855,235 V245 L866,240 Z M877,235 V245 L866,240 Z" fill="#000"/></svg></div>
<div class="a" style="left:818px;top:258px;width:131px;height:131px;border:1px solid #9c9c9c;background:#0a0a0a;box-shadow:inset 0 0 0 1px #fff"></div>
<div class="a" style="left:881px;top:321px;width:5px;height:5px;border:1px solid #fff"></div>
<div class="b" style="left:818px;top:390px;width:42px;height:28px"><svg width="42" height="28" viewBox="818 390 42 28"><path d="M836.5,404.5 H840" stroke="#333" stroke-width="1.2"/></svg></div>
<div class="b" style="left:860px;top:390px;width:42px;height:28px"><svg width="42" height="28" viewBox="860 390 42 28"><path d="M876.5,404.5 H885.5 M881,400 V409" stroke="#333" stroke-width="1.3"/></svg></div>
<div class="lbl" style="left:841px;top:425px">File</div>
<div class="ent" style="left:840px;top:443px;width:110px;height:21px"><div class="ib"></div><div id="t_e1" class="et" style="left:-0.96px;top:2px;transform:scaleX(1.0186);transform-origin:0 0;text-align:left;padding-left:3px">out_broad_thresh</div></div>
<div class="lbl" style="left:841px;top:467px">Object</div>
<div class="ent" style="left:840px;top:485px;width:110px;height:21px"><div class="ib"></div><div id="t_e2" class="et" style="left:-1.56px;top:2px;transform:scaleX(1.0410);transform-origin:0 0;text-align:left;padding-left:3px">HL Tau</div></div>
<div class="lbl" style="left:841px;top:509px">Value</div>
<div class="ent" style="left:840px;top:527px;width:110px;height:21px"><div class="ib"></div><div id="t_e3" class="et" style="left:4.07px;top:2px;transform:scaleX(0.9143);transform-origin:0 0;text-align:center">0</div></div>
<div class="lbl" style="left:841px;top:551px">FK5</div>
<div class="lbl" style="left:819px;top:572px">α</div>
<div class="ent" style="left:840px;top:569px;width:110px;height:21px"><div class="ib"></div><div id="t_e4" class="et" style="left:-5.27px;top:2px;transform:scaleX(1.0921);transform-origin:0 0;text-align:center">4:31:32.3659</div></div>
<div class="lbl" style="left:819px;top:593px">δ</div>
<div class="ent" style="left:840px;top:590px;width:110px;height:21px"><div class="ib"></div><div id="t_e5" class="et" style="left:-5.11px;top:2px;transform:scaleX(1.0929);transform-origin:0 0;text-align:center">+18:13:09.765</div></div>
<div class="lbl" style="left:841px;top:614px">Physical</div>
<div class="lbl" style="left:823px;top:635px">x</div>
<div class="ent" style="left:840px;top:632px;width:110px;height:21px"><div class="ib"></div><div id="t_e6" class="et" style="left:-3.86px;top:2px;transform:scaleX(1.0759);transform-origin:0 0;text-align:center">4262</div></div>
<div class="lbl" style="left:823px;top:656px">y</div>
<div class="ent" style="left:840px;top:653px;width:110px;height:21px"><div class="ib"></div><div id="t_e7" class="et" style="left:-5.99px;top:2px;transform:scaleX(1.1071);transform-origin:0 0;text-align:center">3996</div></div>
<div class="lbl" style="left:841px;top:677px">Image</div>
<div class="lbl" style="left:823px;top:698px">x</div>
<div class="ent" style="left:840px;top:695px;width:110px;height:21px"><div class="ib"></div><div id="t_e8" class="et" style="left:-6.51px;top:2px;transform:scaleX(1.1048);transform-origin:0 0;text-align:center">387</div></div>
<div class="lbl" style="left:823px;top:719px">y</div>
<div class="ent" style="left:840px;top:716px;width:110px;height:21px"><div class="ib"></div><div id="t_e9" class="et" style="left:-6.51px;top:2px;transform:scaleX(1.1048);transform-origin:0 0;text-align:center">161</div></div>
<div class="lbl" style="left:841px;top:740px">Frame 1</div>
<div class="lbl" style="left:823px;top:761px">x</div>
<div class="ent" style="left:840px;top:758px;width:110px;height:21px"><div class="ib"></div><div id="t_e10" class="et" style="left:-0.80px;top:2px;transform:scaleX(1.0000);transform-origin:0 0;text-align:center">1</div></div>
<div class="lbl" style="left:824.5px;top:782px">°</div>
<div class="ent" style="left:840px;top:779px;width:110px;height:21px"><div class="ib"></div><div id="t_e11" class="et" style="left:-0.80px;top:2px;transform:scaleX(1.0000);transform-origin:0 0;text-align:center">0</div></div>
<div class="a" style="left:1px;top:810px;width:953px;height:1px;background:#bdbdbd"></div>
<div class="b" style="left:1px;top:813px;width:32px;height:28px"><svg width="32" height="28" viewBox="1 813 32 28"><rect x="9" y="818.5" width="16.5" height="16.5" stroke="#333" stroke-width="1.8" fill="none"/><path d="M13.2,827.2 H20.8 M17,823.4 V831" stroke="#444" stroke-width="1.2"/></svg></div>
<div class="b" style="left:33px;top:813px;width:32px;height:28px"><svg width="32" height="28" viewBox="33 813 32 28"><rect x="41" y="818.5" width="16.5" height="16.5" stroke="#333" stroke-width="1.8" fill="none"/><text x="49.3" y="831.5" font-family="Liberation Serif" font-size="13" fill="#333" text-anchor="middle">1</text></svg></div>
<div class="b" style="left:65px;top:813px;width:32px;height:28px"><svg width="32" height="28" viewBox="65 813 32 28"><rect x="73" y="818.5" width="16.5" height="16.5" stroke="#333" stroke-width="1.8" fill="none"/><path d="M78,826.5 H82.3" stroke="#444" stroke-width="1.2"/></svg></div>
<div class="b" style="left:97px;top:813px;width:32px;height:28px"><svg width="32" height="28" viewBox="97 813 32 28"><path d="M103.9,827.3 H121.5 L119.0,831.6 L121.5,835.9 H103.9 L106.4,831.6 Z" stroke="#222" stroke-width="2" fill="#f4f4f4" stroke-linejoin="miter"/><path d="M111.7,828 V835 M115.3,828 V835" stroke="#222" stroke-width="1.6"/><path d="M112.9,818.7 V824.5 M108.8,821.2 H117" stroke="#222" stroke-width="2"/></svg></div>
<div class="b" style="left:129px;top:813px;width:32px;height:28px"><svg width="32" height="28" viewBox="129 813 32 28"><path d="M135.89999999999998,827.3 H153.5 L151.0,831.6 L153.5,835.9 H135.89999999999998 L138.39999999999998,831.6 Z" stroke="#222" stroke-width="2" fill="#f4f4f4" stroke-linejoin="miter"/><path d="M143.7,828 V835 M147.29999999999998,828 V835" stroke="#222" stroke-width="1.6"/><text x="145" y="824.4" font-family="Liberation Sans" font-weight="bold" font-size="9.5" fill="#222" text-anchor="middle">1</text></svg></div>
<div class="b" style="left:161px;top:813px;width:32px;height:28px"><svg width="32" height="28" viewBox="161 813 32 28"><path d="M167.89999999999998,827.3 H185.5 L183.0,831.6 L185.5,835.9 H167.89999999999998 L170.39999999999998,831.6 Z" stroke="#222" stroke-width="2" fill="#f4f4f4" stroke-linejoin="miter"/><path d="M175.7,828 V835 M179.29999999999998,828 V835" stroke="#222" stroke-width="1.6"/><path d="M173,822.2 H181.2" stroke="#222" stroke-width="2"/></svg></div>
<div class="b" style="left:193px;top:813px;width:32px;height:28px"><svg width="32" height="28" viewBox="193 813 32 28"><circle cx="206.4" cy="824.3" r="6.7" stroke="#1a1a1a" stroke-width="1.9" fill="none"/><path d="M211.20000000000002,829.1 L218.0,835" stroke="#1a1a1a" stroke-width="2.3"/><path d="M202.8,823.6 H209.4 M206.1,820.3 V826.9" stroke="#1a1a1a" stroke-width="1.8"/></svg></div>
<div class="b" style="left:225px;top:813px;width:32px;height:28px"><svg width="32" height="28" viewBox="225 813 32 28"><circle cx="238.4" cy="824.3" r="6.7" stroke="#1a1a1a" stroke-width="1.9" fill="none"/><path d="M243.20000000000002,829.1 L250.0,835" stroke="#1a1a1a" stroke-width="2.3"/><text x="238.7" y="827.5" font-family="Liberation Serif" font-weight="bold" font-size="10.5" fill="#1a1a1a" text-anchor="middle">1</text></svg></div>
<div class="b" style="left:257px;top:813px;width:32px;height:28px"><svg width="32" height="28" viewBox="257 813 32 28"><circle cx="270.4" cy="824.3" r="6.7" stroke="#1a1a1a" stroke-width="1.9" fill="none"/><path d="M275.2,829.1 L282.0,835" stroke="#1a1a1a" stroke-width="2.3"/><path d="M268.4,824.3 H272" stroke="#1a1a1a" stroke-width="1.5"/></svg></div>
<div class="b" style="left:289px;top:813px;width:32px;height:28px"><svg width="32" height="28" viewBox="289 813 32 28"><rect x="295.5" y="817.5" width="19" height="19" fill="#cfcfcf" stroke="#333" stroke-width="1.3"/><rect x="298.0" y="820" width="14" height="14" fill="#e8e8e8" stroke="#333" stroke-width="1.3"/><path d="M300,827 H310 M305,822 V832" stroke="#111" stroke-width="2"/></svg></div>
<div class="b" style="left:321px;top:813px;width:32px;height:28px"><svg width="32" height="28" viewBox="321 813 32 28"><rect x="327.5" y="817.5" width="19" height="19" fill="#cfcfcf" stroke="#333" stroke-width="1.3"/><rect x="330.0" y="820" width="14" height="14" fill="#e8e8e8" stroke="#333" stroke-width="1.3"/><path d="M334,827 H340" stroke="#111" stroke-width="2"/></svg></div>
<div class="b" style="left:353px;top:813px;width:32px;height:28px"><svg width="32" height="28" viewBox="353 813 32 28"><path d="M364,821 V832.8" stroke="#222" stroke-width="2"/><path d="M375,819.5 L365.5,826.8 L375,834.3 Z" stroke="#222" stroke-width="1.8" fill="#8a8a8a" stroke-linejoin="round"/></svg></div>
<div class="b" style="left:385px;top:813px;width:32px;height:28px"><svg width="32" height="28" viewBox="385 813 32 28"><path d="M407,819.5 L397.5,826.8 L407,834.3 Z" stroke="#222" stroke-width="1.8" fill="#8a8a8a" stroke-linejoin="round"/></svg></div>
<div class="b" style="left:417px;top:813px;width:55px;height:28px"><svg width="55" height="28" viewBox="417 813 55 28"><rect x="427.5" y="817.5" width="19" height="19" fill="#8a8a8a" stroke="#222" stroke-width="1.3"/><path d="M427.5,817.5 L446.5,836.5 M446.5,817.5 L427.5,836.5" stroke="#333" stroke-width="0.8"/><rect x="430.5" y="820.5" width="13" height="13" fill="#fafafa" stroke="#222" stroke-width="1.2"/><rect x="433.3" y="823.3" width="7.4" height="7.4" fill="#9a9a9a" stroke="#222" stroke-width="1.1"/><polygon points="459,823 467,823 463,831" fill="#3c3c3c"/></svg></div>
<div class="b" style="left:472px;top:813px;width:32px;height:28px"><svg width="32" height="28" viewBox="472 813 32 28"><path d="M482.5,819.5 L492.5,826.8 L482.5,834.3 Z" stroke="#222" stroke-width="1.8" fill="#8a8a8a" stroke-linejoin="round"/></svg></div>
<div class="b" style="left:504px;top:813px;width:32px;height:28px"><svg width="32" height="28" viewBox="504 813 32 28"><path d="M525,821 V832.8" stroke="#222" stroke-width="2"/><path d="M514.5,819.5 L524,826.8 L514.5,834.3 Z" stroke="#222" stroke-width="1.8" fill="#8a8a8a" stroke-linejoin="round"/></svg></div>
<div class="b" style="left:536px;top:813px;width:32px;height:28px"><svg width="32" height="28" viewBox="536 813 32 28"><path d="M543.5,822 V832 M543.5,827 H560" stroke="#111" stroke-width="2"/><path d="M556,822.5 L560.5,827 L556,831.5" stroke="#111" stroke-width="2" fill="none"/></svg></div>
<div class="b" style="left:568px;top:813px;width:32px;height:28px"><svg width="32" height="28" viewBox="568 813 32 28"><path d="M580,819.5 H589 M584.6,819.5 V835" stroke="#111" stroke-width="2"/><path d="M580.5,830.8 L584.6,835 L588.8,830.8" stroke="#111" stroke-width="2" fill="none"/></svg></div>
<div class="b" style="left:600px;top:813px;width:32px;height:28px"><svg width="32" height="28" viewBox="600 813 32 28"><rect x="605.2" y="822.9" width="21.8" height="7.8" fill="url(#gb)"/><defs><linearGradient id="gb"><stop offset="0" stop-color="#000"/><stop offset="1" stop-color="#fff"/></linearGradient></defs></svg></div>
<div class="a" style="left:0;top:1px;width:1px;height:843px;background:#666"></div>
<div class="a" style="left:1px;top:30px;width:1px;height:812px;background:#e4e4e4"></div>
<div class="a" style="left:953px;top:30px;width:1px;height:813px;background:#e2e2e2"></div>
<div class="a" style="left:954px;top:1px;width:1px;height:843px;background:#666"></div>
<div class="a" style="left:1px;top:842px;width:953px;height:1px;background:#e2e2e2"></div>
<div class="a" style="left:0;top:843px;width:955px;height:1px;background:#666"></div>
</body></html>
